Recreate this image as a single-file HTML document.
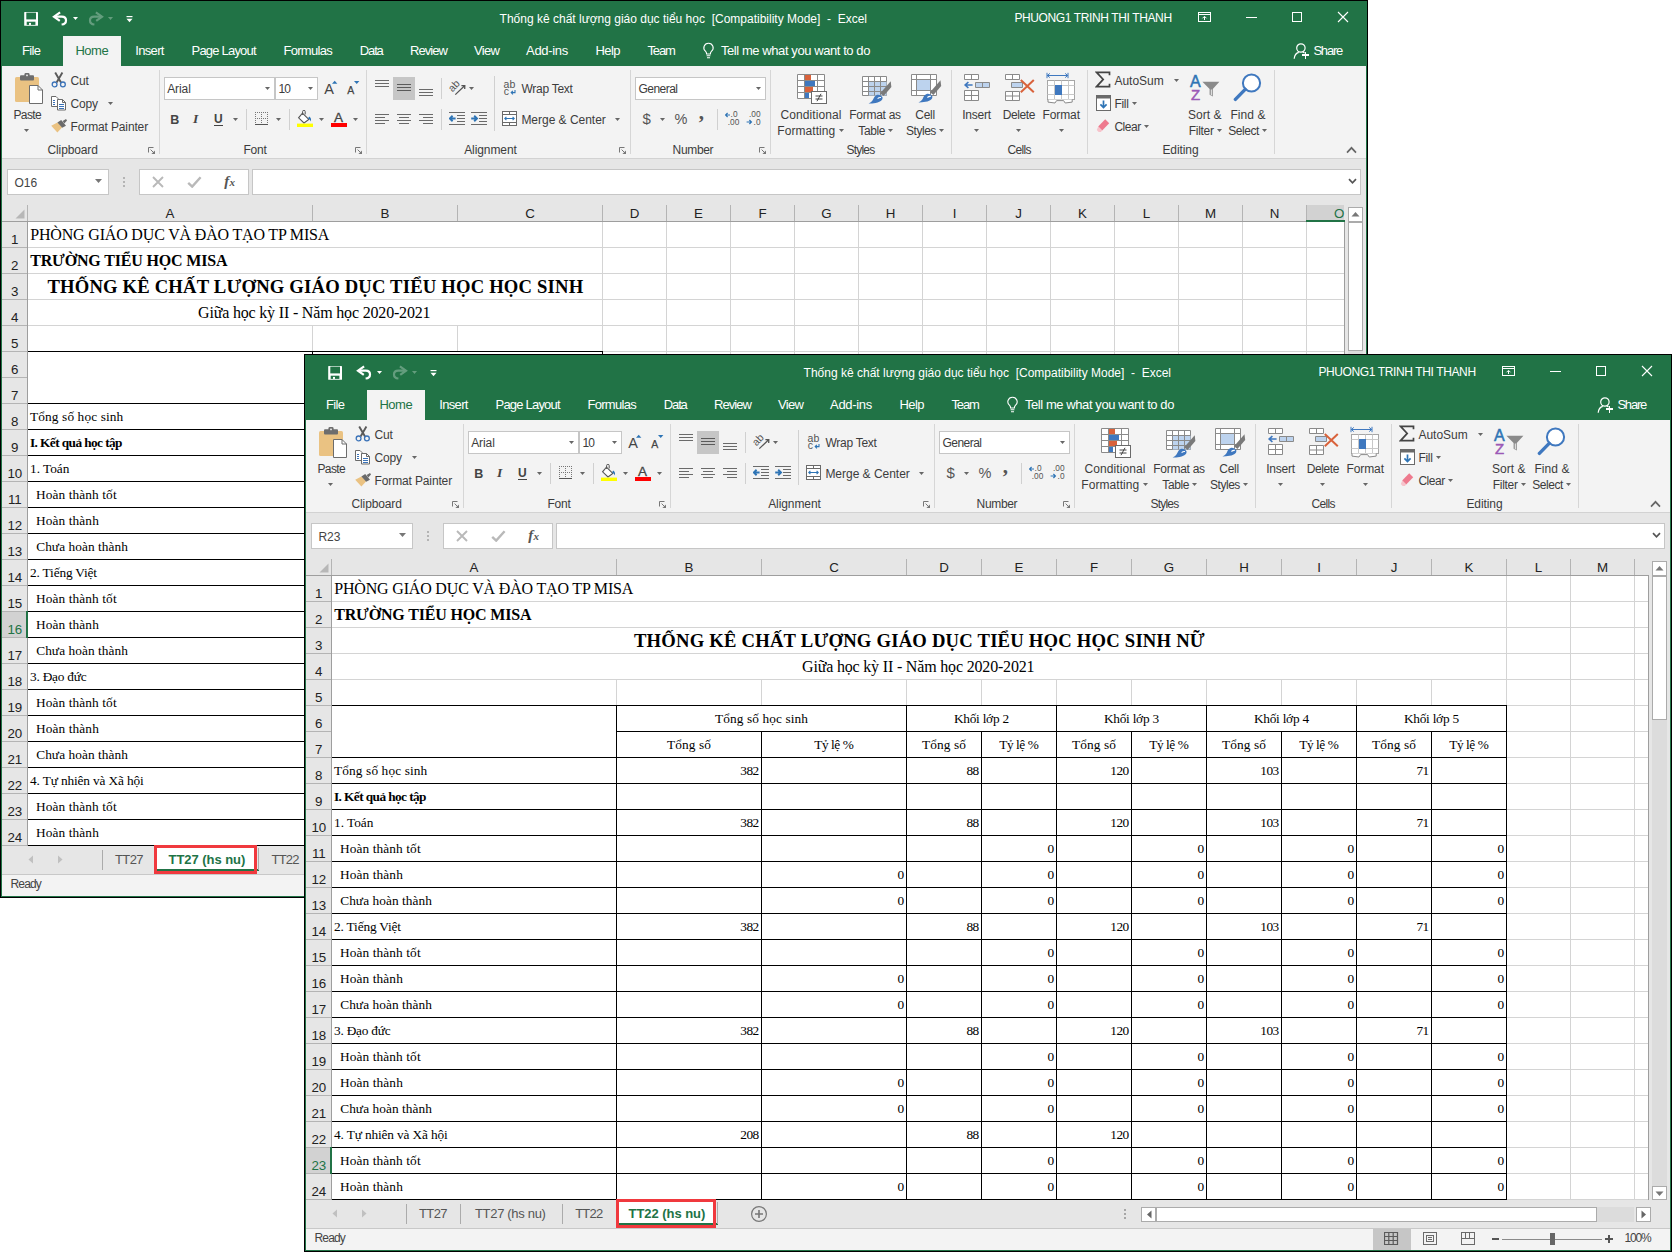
<!DOCTYPE html>
<html lang="vi"><head><meta charset="utf-8"><title>Excel</title><style>
*{box-sizing:border-box;margin:0;padding:0}
html,body{width:1672px;height:1252px;background:#fff;overflow:hidden}
body{position:relative;font-family:"Liberation Sans",sans-serif}
.win{position:absolute;width:1368px;height:898px;background:#fff;overflow:hidden;border:1px solid #000}
.in{position:absolute;left:-1px;top:-1px;width:1368px;height:898px}
.r{position:absolute;display:block}
.t{position:absolute;white-space:pre;line-height:1;display:block}
</style></head>
<body>
<div class="win" style="left:0px;top:0px">
<div class="in">
<div class="r" style="left:1px;top:1px;width:1366px;height:896px;border:1px solid #217346"></div>
<div class="r" style="left:1px;top:1px;width:1366px;height:65px;background:#217346"></div>
<div class="r" style="left:63px;top:36px;width:58px;height:30px;background:#f3f3f3"></div>
<div class="r" style="left:2px;top:66px;width:1364px;height:92px;background:#f3f3f3"></div>
<div class="r" style="left:2px;top:158px;width:1364px;height:1px;background:#d2d2d2"></div>
<div class="r" style="left:2px;top:159px;width:1364px;height:63px;background:#e6e6e6"></div>
<svg class="r" style="left:23px;top:11px" width="16" height="16" viewBox="0 0 16 16"><rect x="1.200" y="1" width="13.800" height="13.800" rx="0.600" fill="#fff"/><rect x="3.300" y="1.600" width="9.700" height="6.800" fill="#217346"/><rect x="3.700" y="10.700" width="8.700" height="3.200" fill="#217346"/><rect x="6" y="11.900" width="2" height="2" fill="#fff"/></svg>
<svg class="r" style="left:52px;top:11px" width="17" height="16" viewBox="0 0 17 16"><path d="M8.100 1.300L2 5.700l5.800 4.100" fill="none" stroke="#fff" stroke-width="2.200"/><path d="M2.600 5.700h7.200c2.600 0 4.200 1.700 4.200 3.700 0 2.200-1.800 3.800-4.400 4.100" fill="none" stroke="#fff" stroke-width="2.200"/></svg>
<svg class="r" style="left:72px;top:16px" width="7" height="5" viewBox="0 0 7 5"><path d="M1 1h5l-2.5 3z" fill="#fff"/></svg>
<svg class="r" style="left:87px;top:11px" width="17" height="16" viewBox="0 0 17 16"><g opacity="0.300"><path d="M8.900 1.300L15 5.700l-5.800 4.100" fill="none" stroke="#fff" stroke-width="2.200"/><path d="M14.400 5.700H7.200c-2.600 0-4.200 1.700-4.200 3.700 0 2.200 1.800 3.800 4.400 4.100" fill="none" stroke="#fff" stroke-width="2.200"/></g></svg>
<svg class="r" style="left:107px;top:16px" width="7" height="5" viewBox="0 0 7 5"><path d="M1 1h5l-2.500 3z" fill="#fff" opacity="0.300"/></svg>
<svg class="r" style="left:126px;top:15px" width="7" height="8" viewBox="0 0 7 8"><path d="M0.500 1.600h6" stroke="#fff" stroke-width="1.200"/><path d="M0.500 3.800h6l-3 3.400z" fill="#fff"/></svg>
<span class="t" style="left:499.60px;top:13.00px;font-size:12px;color:#fff">Thống kê chất lượng giáo dục tiểu học  [Compatibility Mode]  -  Excel</span>
<span class="t" style="left:1014.40px;top:12.00px;font-size:12px;color:#fff;letter-spacing:-0.380px">PHUONG1 TRINH THI THANH</span>
<svg class="r" style="left:1198px;top:12px" width="14" height="11" viewBox="0 0 14 11"><g shape-rendering="crispEdges" fill="none" stroke="#fff"><rect x="0.500" y="0.500" width="12" height="9"/><path d="M0.500 2.500h12"/><path d="M6.500 8V4.500"/></g><path d="M4.500 6.300l2-2 2 2" fill="none" stroke="#fff"/></svg>
<div class="r" style="left:1246px;top:17px;width:11px;height:1px;background:#fff"></div>
<div class="r" style="left:1292px;top:12px;width:10px;height:10px;border:1px solid #fff"></div>
<svg class="r" style="left:1337px;top:11px" width="12" height="12" viewBox="0 0 12 12"><path d="M1 1l10 10M11 1L1 11" stroke="#fff" stroke-width="1.1" fill="none"/></svg>
<span class="t" style="left:22.10px;top:44.00px;font-size:13px;color:#fff;letter-spacing:-0.713px">File</span>
<span class="t" style="left:135.20px;top:44.00px;font-size:13px;color:#fff;letter-spacing:-0.653px">Insert</span>
<span class="t" style="left:191.50px;top:44.00px;font-size:13px;color:#fff;letter-spacing:-0.792px">Page Layout</span>
<span class="t" style="left:283.40px;top:44.00px;font-size:13px;color:#fff;letter-spacing:-0.673px">Formulas</span>
<span class="t" style="left:359.80px;top:44.00px;font-size:13px;color:#fff;letter-spacing:-1.142px">Data</span>
<span class="t" style="left:410.00px;top:44.00px;font-size:13px;color:#fff;letter-spacing:-0.938px">Review</span>
<span class="t" style="left:474.10px;top:44.00px;font-size:13px;color:#fff;letter-spacing:-0.713px">View</span>
<span class="t" style="left:526.10px;top:44.00px;font-size:13px;color:#fff;letter-spacing:-0.340px">Add-ins</span>
<span class="t" style="left:595.50px;top:44.00px;font-size:13px;color:#fff;letter-spacing:-0.562px">Help</span>
<span class="t" style="left:647.50px;top:44.00px;font-size:13px;color:#fff;letter-spacing:-1.174px">Team</span>
<span class="t" style="left:75.40px;top:44.00px;font-size:13px;color:#217346;letter-spacing:-0.447px">Home</span>
<svg class="r" style="left:702px;top:42px" width="13" height="18" viewBox="0 0 13 18"><path d="M6.5 1.2a4.6 4.6 0 0 0-2.9 8.2c0.7 0.7 1 1.5 1 2.6h3.8c0-1.1 0.3-1.9 1-2.6A4.6 4.6 0 0 0 6.5 1.2z" fill="none" stroke="#fff" stroke-width="1.1"/><path d="M4.6 13.8h3.8M5 15.8h3" stroke="#fff" stroke-width="1.1"/></svg>
<span class="t" style="left:720.90px;top:44.00px;font-size:13px;color:#fff;letter-spacing:-0.419px">Tell me what you want to do</span>
<svg class="r" style="left:1293px;top:42px" width="17" height="18" viewBox="0 0 17 18"><circle cx="7.900" cy="6" r="4.200" fill="none" stroke="#fff" stroke-width="1.200"/><path d="M1.200 16.800c0.300-3.600 2.200-5.800 4.600-6.400" fill="none" stroke="#fff" stroke-width="1.200"/><path d="M9.800 10.200c0.700 0.200 1.300 0.500 1.800 0.900" fill="none" stroke="#fff" stroke-width="1.200"/><path d="M12.500 9.500v7M9 13h7" stroke="#fff" stroke-width="1.100" shape-rendering="crispEdges"/></svg>
<span class="t" style="left:1313.40px;top:44.00px;font-size:13px;color:#fff;letter-spacing:-1.200px">Share</span>
<svg class="r" style="left:14px;top:72px" width="31" height="33" viewBox="0 0 31 33"><rect x="1" y="5" width="24" height="25" rx="1.500" fill="#eac282"/><rect x="6" y="3.200" width="14" height="5.400" rx="1" fill="#6d6d6d"/><rect x="10.400" y="1" width="5.200" height="4" rx="1.400" fill="#6d6d6d"/><rect x="12.200" y="2.600" width="1.600" height="1.600" fill="#f3f3f3"/><path d="M15.500 13.500h8.500l4.500 4.500v13.500h-13z" fill="#fff" stroke="#6d6d6d"/><path d="M24 13.500v4.500h4.500" fill="none" stroke="#6d6d6d"/></svg>
<span class="t" style="left:13.40px;top:109.00px;font-size:12px;color:#3c3c3c;letter-spacing:-0.577px">Paste</span>
<svg class="r" style="left:23px;top:128px" width="7" height="5" viewBox="0 0 7 5"><path d="M1 1h5l-2.5 3z" fill="#666"/></svg>
<svg class="r" style="left:51px;top:72px" width="16" height="16" viewBox="0 0 16 16"><path d="M4.200 0.600l5.800 9.800M11.400 0.600l-5.800 9.800" stroke="#5a5a5a" stroke-width="1.900" fill="none"/><circle cx="3.600" cy="12.400" r="2.400" fill="none" stroke="#3a72b8" stroke-width="1.300"/><circle cx="11.900" cy="12.400" r="2.400" fill="none" stroke="#3a72b8" stroke-width="1.300"/></svg>
<span class="t" style="left:70.60px;top:75.00px;font-size:12px;color:#3c3c3c;letter-spacing:-0.163px">Cut</span>
<svg class="r" style="left:50px;top:96px" width="17" height="15" viewBox="0 0 17 15"><path d="M1.500 0.500h4.500l2 2v8h-6.500z" fill="#fff" stroke="#6a6a6a"/><path d="M3 4.500h2M3 6.500h2M3 8.500h2" stroke="#3a72b8" stroke-width="1"/><path d="M7.500 3.500h5l3 3v7.500h-8z" fill="#fff" stroke="#6a6a6a"/><path d="M12.500 3.500v3h3" fill="none" stroke="#6a6a6a"/><path d="M9 8.500h5M9 10.500h5M9 12.500h5" stroke="#3a72b8" stroke-width="1"/></svg>
<span class="t" style="left:70.60px;top:98.00px;font-size:12px;color:#3c3c3c;letter-spacing:-0.204px">Copy</span>
<svg class="r" style="left:107px;top:101px" width="7" height="5" viewBox="0 0 7 5"><path d="M1 1h5l-2.5 3z" fill="#666"/></svg>
<svg class="r" style="left:51px;top:118px" width="17" height="16" viewBox="0 0 17 16"><path d="M0.200 7.800l6.200-3.300 4.800 4.700-4.800 5.300z" fill="#eac282"/><path d="M6.400 4.500l3.800-2.500 4.800 5.800-3.800 1.900z" fill="#6a6a6a"/><path d="M11.700 3l3.300-2 1 1.500-2.700 2.900z" fill="#6a6a6a"/></svg>
<span class="t" style="left:70.60px;top:121.00px;font-size:12px;color:#3c3c3c;letter-spacing:-0.140px">Format Painter</span>
<span class="t" style="left:47.50px;top:144.00px;font-size:12px;color:#3c3c3c;letter-spacing:-0.119px">Clipboard</span>
<svg class="r" style="left:148px;top:147px" width="8" height="8" viewBox="0 0 8 8"><path d="M0.500 5.500V0.500H5.500" fill="none" stroke="#777"/><path d="M2.600 2.600l3.600 3.600" fill="none" stroke="#777"/><path d="M7 3.400V7H3.400z" fill="#777"/></svg>
<div class="r" style="left:159px;top:70px;width:1px;height:84px;background:#d6d6d6"></div>
<div class="r" style="left:164px;top:77px;width:111px;height:23px;background:#fff;border:1px solid #c6c6c6"></div>
<div class="r" style="left:275px;top:77px;width:43px;height:23px;background:#fff;border:1px solid #c6c6c6"></div>
<span class="t" style="left:167.20px;top:83.00px;font-size:12px;color:#3c3c3c;letter-spacing:-0.083px">Arial</span>
<svg class="r" style="left:264px;top:86px" width="7" height="5" viewBox="0 0 7 5"><path d="M1 1h5l-2.5 3z" fill="#666"/></svg>
<span class="t" style="left:278.60px;top:83.00px;font-size:12px;color:#3c3c3c;letter-spacing:-0.980px">10</span>
<svg class="r" style="left:307px;top:86px" width="7" height="5" viewBox="0 0 7 5"><path d="M1 1h5l-2.5 3z" fill="#666"/></svg>
<span class="t" style="left:324.30px;top:82.00px;font-size:14.5px;color:#444">A</span>
<svg class="r" style="left:332px;top:80px" width="6" height="4" viewBox="0 0 6 4"><path d="M0 3.800l2.700-3 2.700 3z" fill="#2e74b5"/></svg>
<span class="t" style="left:347.20px;top:85.00px;font-size:10.5px;color:#444;-webkit-text-stroke:0.25px #444">A</span>
<svg class="r" style="left:354px;top:81px" width="6" height="4" viewBox="0 0 6 4"><path d="M0 0h5.400l-2.700 3z" fill="#2e74b5"/></svg>
<span class="t" style="left:170.20px;top:114.00px;font-size:12.5px;color:#444;font-weight:bold">B</span>
<span class="t" style="left:193.00px;top:112.00px;font-size:13.5px;color:#444;font-family:'Liberation Serif',serif;font-weight:bold;font-style:italic">I</span>
<span class="t" style="left:213.90px;top:113.00px;font-size:12px;color:#444;font-weight:bold">U</span>
<div class="r" style="left:214px;top:125px;width:9px;height:1px;background:#444"></div>
<svg class="r" style="left:232px;top:117px" width="7" height="5" viewBox="0 0 7 5"><path d="M1 1h5l-2.5 3z" fill="#666"/></svg>
<div class="r" style="left:246px;top:109px;width:1px;height:21px;background:#d0d0d0"></div>
<svg class="r" style="left:255px;top:112px" width="13" height="13" viewBox="0 0 13 13"><g shape-rendering="crispEdges" fill="none" stroke="#777" stroke-dasharray="1 1"><path d="M0 0.500h13M0 6.500h13M0.500 0v12M6.500 0v12M12.500 0v12"/></g><path d="M0 12.400h13" stroke="#555" stroke-width="1.200" shape-rendering="crispEdges"/></svg>
<svg class="r" style="left:275px;top:117px" width="7" height="5" viewBox="0 0 7 5"><path d="M1 1h5l-2.5 3z" fill="#666"/></svg>
<div class="r" style="left:289px;top:109px;width:1px;height:21px;background:#d0d0d0"></div>
<svg class="r" style="left:296px;top:110px" width="18" height="17" viewBox="0 0 18 17"><path d="M6.4 3.2l6.4 6.2-4.8 3.6-5.4-5.2z" fill="#fff" stroke="#555" stroke-width="1.1"/><path d="M6.6 5V1.6a1.3 1.3 0 0 1 2.6 0v2.8" fill="none" stroke="#555" stroke-width="1"/><path d="M13.2 6.6c1.8 1.2 2.4 3 1.4 5-0.3-1.6-1.2-2.6-2.6-3z" fill="#2e74b5"/><rect x="1" y="13.6" width="16" height="3.4" fill="#ffff00"/></svg>
<svg class="r" style="left:318px;top:117px" width="7" height="5" viewBox="0 0 7 5"><path d="M1 1h5l-2.5 3z" fill="#666"/></svg>
<span class="t" style="left:334.00px;top:111.00px;font-size:13.5px;color:#444;-webkit-text-stroke:0.3px #444">A</span>
<div class="r" style="left:331px;top:123px;width:16px;height:4px;background:#ff0000"></div>
<svg class="r" style="left:352px;top:117px" width="7" height="5" viewBox="0 0 7 5"><path d="M1 1h5l-2.5 3z" fill="#666"/></svg>
<span class="t" style="left:243.50px;top:144.00px;font-size:12px;color:#3c3c3c;letter-spacing:-0.254px">Font</span>
<svg class="r" style="left:355px;top:147px" width="8" height="8" viewBox="0 0 8 8"><path d="M0.500 5.500V0.500H5.500" fill="none" stroke="#777"/><path d="M2.600 2.600l3.600 3.600" fill="none" stroke="#777"/><path d="M7 3.400V7H3.400z" fill="#777"/></svg>
<div class="r" style="left:366px;top:70px;width:1px;height:84px;background:#d6d6d6"></div>
<svg class="r" style="left:375px;top:80px" width="14" height="7" viewBox="0 0 14 7"><path d="M0 0.5h14M0 3.5h14M0 6.5h14" stroke="#6a6a6a"/></svg>
<div class="r" style="left:393px;top:77px;width:22px;height:23px;background:#c6c6c6"></div>
<svg class="r" style="left:397px;top:84px" width="14" height="7" viewBox="0 0 14 7"><path d="M0 0.5h14M0 3.5h14M0 6.5h14" stroke="#5a5a5a"/></svg>
<svg class="r" style="left:419px;top:89px" width="14" height="7" viewBox="0 0 14 7"><path d="M0 0.5h14M0 3.5h14M0 6.5h14" stroke="#6a6a6a"/></svg>
<div class="r" style="left:441px;top:78px;width:1px;height:21px;background:#d0d0d0"></div>
<svg class="r" style="left:446px;top:78px" width="21" height="19" viewBox="0 0 21 19"><path d="M9.300 16.600L18.600 7.800M15.400 7.600l3.400 0.100-0.100 3.400" fill="none" stroke="#555" stroke-width="1.300"/><text x="0" y="0" font-family="Liberation Sans,sans-serif" font-size="10.500" fill="#555" transform="translate(6.600 14.600) rotate(-47)">ab</text></svg>
<svg class="r" style="left:468px;top:86px" width="7" height="5" viewBox="0 0 7 5"><path d="M1 1h5l-2.5 3z" fill="#666"/></svg>
<div class="r" style="left:494px;top:76px;width:1px;height:55px;background:#d0d0d0"></div>
<svg class="r" style="left:503px;top:79px" width="15" height="17" viewBox="0 0 15 17"><text x="0.600" y="9.200" font-family="Liberation Sans,sans-serif" font-size="10.500" fill="#555">ab</text><text x="0.800" y="15.900" font-family="Liberation Sans,sans-serif" font-size="10.500" fill="#555">c</text><path d="M12 11v2.600H8.400M9.900 11.900l-1.700 1.700 1.700 1.700" fill="none" stroke="#2e74b5" stroke-width="1.100"/></svg>
<span class="t" style="left:521.40px;top:83.00px;font-size:12px;color:#3c3c3c;letter-spacing:-0.253px">Wrap Text</span>
<svg class="r" style="left:375px;top:114px" width="14" height="11" viewBox="0 0 14 11"><path d="M0 0.5h14M0 3.5h10M0 6.5h14M0 9.5h10" stroke="#6a6a6a"/></svg>
<svg class="r" style="left:397px;top:114px" width="14" height="11" viewBox="0 0 14 11"><path d="M0 0.5h14M2 3.5h10M0 6.5h14M2 9.5h10" stroke="#6a6a6a"/></svg>
<svg class="r" style="left:419px;top:114px" width="14" height="11" viewBox="0 0 14 11"><path d="M0 0.5h14M4 3.5h10M0 6.5h14M4 9.5h10" stroke="#6a6a6a"/></svg>
<div class="r" style="left:441px;top:109px;width:1px;height:21px;background:#d0d0d0"></div>
<svg class="r" style="left:449px;top:112px" width="16" height="14" viewBox="0 0 16 14"><path d="M0 0.500h16M8 3.500h8M8 6.500h8M8 9.500h8M0 12.500h16" stroke="#6a6a6a" shape-rendering="crispEdges"/><path d="M6.600 6.500H1.400M3.600 3.800L0.800 6.500l2.800 2.700" fill="none" stroke="#2e74b5" stroke-width="1.900"/></svg>
<svg class="r" style="left:471px;top:112px" width="16" height="14" viewBox="0 0 16 14"><path d="M0 0.500h16M8 3.500h8M8 6.500h8M8 9.500h8M0 12.500h16" stroke="#6a6a6a" shape-rendering="crispEdges"/><path d="M0.200 6.500h5.200M3.200 3.800l2.800 2.700-2.800 2.700" fill="none" stroke="#2e74b5" stroke-width="1.900"/></svg>
<svg class="r" style="left:502px;top:111px" width="16" height="15" viewBox="0 0 16 15"><path d="M0.500 0.500h14v14h-14zM0.500 3.500h14M0.500 11.500h14M7.500 0.500v3M7.500 11.500v3" fill="#fff" stroke="#6a6a6a" shape-rendering="crispEdges"/><path d="M2.800 7.500h9.400M4.400 5.900L2.800 7.500l1.600 1.600M10.600 5.900l1.600 1.600-1.600 1.600" fill="none" stroke="#2e74b5" stroke-width="1.100"/></svg>
<span class="t" style="left:521.40px;top:114.00px;font-size:12px;color:#3c3c3c;letter-spacing:-0.022px">Merge &amp; Center</span>
<svg class="r" style="left:614px;top:117px" width="7" height="5" viewBox="0 0 7 5"><path d="M1 1h5l-2.5 3z" fill="#666"/></svg>
<span class="t" style="left:464.20px;top:144.00px;font-size:12px;color:#3c3c3c;letter-spacing:-0.086px">Alignment</span>
<svg class="r" style="left:619px;top:147px" width="8" height="8" viewBox="0 0 8 8"><path d="M0.500 5.500V0.500H5.500" fill="none" stroke="#777"/><path d="M2.600 2.600l3.600 3.600" fill="none" stroke="#777"/><path d="M7 3.400V7H3.400z" fill="#777"/></svg>
<div class="r" style="left:630px;top:70px;width:1px;height:84px;background:#d6d6d6"></div>
<div class="r" style="left:635px;top:77px;width:131px;height:23px;background:#fff;border:1px solid #c6c6c6"></div>
<span class="t" style="left:638.60px;top:83.00px;font-size:12px;color:#3c3c3c;letter-spacing:-0.558px">General</span>
<svg class="r" style="left:755px;top:86px" width="7" height="5" viewBox="0 0 7 5"><path d="M1 1h5l-2.5 3z" fill="#666"/></svg>
<span class="t" style="left:642.60px;top:111.00px;font-size:15px;color:#555">$</span>
<svg class="r" style="left:659px;top:117px" width="7" height="5" viewBox="0 0 7 5"><path d="M1 1h5l-2.5 3z" fill="#666"/></svg>
<span class="t" style="left:674.50px;top:112.00px;font-size:14.5px;color:#555">%</span>
<span class="t" style="left:698.80px;top:102.00px;font-size:21px;color:#555;font-family:'Liberation Serif',serif;font-weight:bold">,</span>
<div class="r" style="left:717px;top:109px;width:1px;height:21px;background:#d0d0d0"></div>
<svg class="r" style="left:725px;top:111px" width="16" height="15" viewBox="0 0 16 15"><path d="M5 4H0.8M2.6 2L0.6 4l2 2" fill="none" stroke="#2e74b5" stroke-width="1.2"/><text x="5.6" y="6.4" font-family="Liberation Sans,sans-serif" font-size="8.300" fill="#555">.0</text><text x="2.8" y="14" font-family="Liberation Sans,sans-serif" font-size="8.300" fill="#555">.00</text></svg>
<svg class="r" style="left:746px;top:111px" width="17" height="15" viewBox="0 0 17 15"><text x="3" y="6.4" font-family="Liberation Sans,sans-serif" font-size="8.300" fill="#555">.00</text><path d="M0.6 11h4.6M3.4 9l2 2-2 2" fill="none" stroke="#2e74b5" stroke-width="1.2"/><text x="7.6" y="14" font-family="Liberation Sans,sans-serif" font-size="8.300" fill="#555">.0</text></svg>
<span class="t" style="left:672.60px;top:144.00px;font-size:12px;color:#3c3c3c;letter-spacing:-0.348px">Number</span>
<svg class="r" style="left:759px;top:147px" width="8" height="8" viewBox="0 0 8 8"><path d="M0.500 5.500V0.500H5.500" fill="none" stroke="#777"/><path d="M2.600 2.600l3.600 3.600" fill="none" stroke="#777"/><path d="M7 3.400V7H3.400z" fill="#777"/></svg>
<div class="r" style="left:770px;top:70px;width:1px;height:84px;background:#d6d6d6"></div>
<svg class="r" style="left:797px;top:74px" width="31" height="31" viewBox="0 0 31 31"><path d="M0.5 0.5h27v24h-27zM0.5 6.5h27M0.5 12.5h27M0.5 18.5h27M7.5 0.5v24M20.5 0.5v24" fill="#fff" stroke="#8a8a8a"/><rect x="8" y="1" width="6" height="5" fill="#d9623b"/><rect x="8" y="7" width="10" height="5" fill="#3f78bf"/><rect x="8" y="13" width="8" height="5" fill="#d9623b"/><rect x="8" y="19" width="4" height="5" fill="#3f78bf"/><rect x="14.5" y="17.5" width="15" height="12" fill="#fff" stroke="#6a6a6a"/><path d="M18.5 22h7M18.5 25h7M24 19.8l-4 7.4" stroke="#444" stroke-width="1" fill="none"/></svg>
<span class="t" style="left:780.40px;top:109.00px;font-size:12px;color:#3c3c3c;letter-spacing:0.105px">Conditional</span>
<span class="t" style="left:777.30px;top:125.00px;font-size:12px;color:#3c3c3c;letter-spacing:0.064px">Formatting</span>
<svg class="r" style="left:838px;top:128px" width="7" height="5" viewBox="0 0 7 5"><path d="M1 1h5l-2.5 3z" fill="#666"/></svg>
<svg class="r" style="left:862px;top:76px" width="31" height="29" viewBox="0 0 31 29"><path d="M0.5 0.5h24v19h-24z" fill="#fff" stroke="#8a8a8a"/><rect x="6.5" y="5.5" width="18" height="14" fill="#bdd3ee"/><path d="M0.5 5.5h24M0.5 10.5h24M0.5 15.5h24M6.5 0.5v19M12.5 0.5v19M18.5 0.5v19" fill="none" stroke="#8a8a8a"/><path d="M28.700 5.300l0.700 5.700-7.800 9.100-3.400-2.800z" fill="#7a7a7a"/><path d="M14.800 19c2.200-0.600 4.400 0.400 5.700 2.250 0.200 1.200-0.100 2.100-0.600 2.850-1.400 1.500-3.400 2.400-6.200 2.800-2.300 0.400-4.700 0.600-7.100 0.600 2-0.900 3.300-2 4.200-3.400 0.600-1.100 0.900-2.300 1.700-3.400 0.600-0.800 1.400-1.400 2.300-1.700z" fill="#3f78bf"/><path d="M15.600 22.600c1-0.900 2.200-1.300 3.400-1.100" stroke="#fff" stroke-width="1.100" fill="none"/></svg>
<span class="t" style="left:849.30px;top:109.00px;font-size:12px;color:#3c3c3c;letter-spacing:-0.280px">Format as</span>
<span class="t" style="left:858.30px;top:125.00px;font-size:12px;color:#3c3c3c;letter-spacing:-0.398px">Table</span>
<svg class="r" style="left:887px;top:128px" width="7" height="5" viewBox="0 0 7 5"><path d="M1 1h5l-2.5 3z" fill="#666"/></svg>
<svg class="r" style="left:911px;top:74px" width="31" height="30" viewBox="0 0 31 30"><path d="M0.5 0.5h25v21h-25z" fill="#fff" stroke="#8a8a8a"/><rect x="5.5" y="5.5" width="14" height="11" fill="#bdd3ee"/><path d="M0.5 5.500h25M0.5 16.500h25M5.5 0.500v21M19.500 0.500v21" fill="none" stroke="#8a8a8a"/><g transform="translate(0.800 0.900)"><path d="M28.700 5.300l0.700 5.700-7.800 9.100-3.400-2.800z" fill="#7a7a7a"/><path d="M14.800 19c2.200-0.600 4.400 0.400 5.700 2.250 0.200 1.200-0.100 2.100-0.600 2.850-1.400 1.500-3.400 2.400-6.200 2.800-2.300 0.400-4.700 0.600-7.100 0.600 2-0.900 3.300-2 4.200-3.400 0.600-1.100 0.900-2.300 1.700-3.400 0.600-0.800 1.400-1.400 2.300-1.700z" fill="#3f78bf"/><path d="M15.600 22.600c1-0.900 2.200-1.300 3.400-1.100" stroke="#fff" stroke-width="1.100" fill="none"/></g></svg>
<span class="t" style="left:915.30px;top:109.00px;font-size:12px;color:#3c3c3c;letter-spacing:-0.293px">Cell</span>
<span class="t" style="left:906.10px;top:125.00px;font-size:12px;color:#3c3c3c;letter-spacing:-0.481px">Styles</span>
<svg class="r" style="left:938px;top:128px" width="7" height="5" viewBox="0 0 7 5"><path d="M1 1h5l-2.5 3z" fill="#666"/></svg>
<span class="t" style="left:846.40px;top:144.00px;font-size:12px;color:#3c3c3c;letter-spacing:-0.765px">Styles</span>
<div class="r" style="left:951px;top:70px;width:1px;height:84px;background:#d6d6d6"></div>
<svg class="r" style="left:963px;top:73px" width="28" height="29" viewBox="0 0 28 29"><path d="M1.500 1.500h14v5h-14zM8.500 1.500v5" fill="#fff" stroke="#8a8a8a"/><path d="M1.500 17.500h14v10h-14zM8.500 17.500v10M1.500 22.500h14" fill="#fff" stroke="#8a8a8a"/><path d="M12.500 9.500h14v5h-14zM19.500 9.500v5" fill="#bdd3ee" stroke="#8a8a8a"/><path d="M9.600 12H2.400M5.400 9L2.200 12l3.200 3" fill="none" stroke="#3f78bf" stroke-width="1.700"/></svg>
<span class="t" style="left:962.20px;top:109.00px;font-size:12px;color:#3c3c3c;letter-spacing:-0.219px">Insert</span>
<svg class="r" style="left:973px;top:128px" width="7" height="5" viewBox="0 0 7 5"><path d="M1 1h5l-2.5 3z" fill="#666"/></svg>
<svg class="r" style="left:1004px;top:73px" width="32" height="29" viewBox="0 0 32 29"><path d="M1.500 1.500h14v5h-14zM8.500 1.500v5" fill="#fff" stroke="#8a8a8a"/><path d="M1.500 18.500h14v9h-14zM8.500 18.500v9M1.500 23h14" fill="#fff" stroke="#8a8a8a"/><path d="M7.500 9.500h11v5h-11z" fill="#bdd3ee" stroke="#8a8a8a"/><path d="M16.800 7l13 12.200M29.800 7L16.800 19.200" fill="none" stroke="#d9623b" stroke-width="2"/></svg>
<span class="t" style="left:1002.80px;top:109.00px;font-size:12px;color:#3c3c3c;letter-spacing:-0.415px">Delete</span>
<svg class="r" style="left:1015px;top:128px" width="7" height="5" viewBox="0 0 7 5"><path d="M1 1h5l-2.5 3z" fill="#666"/></svg>
<svg class="r" style="left:1046px;top:72px" width="30" height="33" viewBox="0 0 30 33"><path d="M1 3.500h21M1 0.800v5.400M22 0.800v5.400M3.800 1.400L1.400 3.500l2.400 2.100M19.200 1.400l2.400 2.100-2.400 2.100" fill="none" stroke="#3f78bf" stroke-width="1"/><path d="M1.500 8.500h27v19h-27z" fill="#fff" stroke="#8a8a8a" stroke-dasharray="1 0"/><path d="M1.500 13.500h27M1.500 22.500h27M8.500 8.500v19M15.500 8.500v19M22.500 8.500v19" fill="none" stroke="#c8c8c8"/><rect x="9" y="13" width="7" height="10" fill="#3f78bf"/><path d="M2 27.500v2.600l7 0.900 1.600-2.400h7l1.600 2.400 7-0.900v-2.600" fill="#fff" stroke="#8a8a8a"/></svg>
<span class="t" style="left:1042.60px;top:109.00px;font-size:12px;color:#3c3c3c;letter-spacing:-0.119px">Format</span>
<svg class="r" style="left:1058px;top:128px" width="7" height="5" viewBox="0 0 7 5"><path d="M1 1h5l-2.5 3z" fill="#666"/></svg>
<span class="t" style="left:1007.60px;top:144.00px;font-size:12px;color:#3c3c3c;letter-spacing:-0.714px">Cells</span>
<div class="r" style="left:1087px;top:70px;width:1px;height:84px;background:#d6d6d6"></div>
<svg class="r" style="left:1095px;top:71px" width="16" height="17" viewBox="0 0 16 17"><path d="M14.500 4.200V1.400H1.600l6.600 7-6.600 7.200h12.900v-2.800" fill="none" stroke="#444" stroke-width="1.700"/></svg>
<span class="t" style="left:1114.40px;top:75.00px;font-size:12px;color:#3c3c3c;letter-spacing:-0.008px">AutoSum</span>
<svg class="r" style="left:1173px;top:78px" width="7" height="5" viewBox="0 0 7 5"><path d="M1 1h5l-2.5 3z" fill="#666"/></svg>
<svg class="r" style="left:1096px;top:95px" width="15" height="16" viewBox="0 0 15 16"><rect x="0.500" y="0.500" width="14" height="15" fill="#fff" stroke="#6a6a6a"/><rect x="0.500" y="0.500" width="14" height="3" fill="#6a6a6a"/><path d="M7.500 5.600v6.800M4.400 9.400l3.100 3.200 3.100-3.200" fill="none" stroke="#2e74b5" stroke-width="1.700"/></svg>
<span class="t" style="left:1114.40px;top:98.00px;font-size:12px;color:#3c3c3c;letter-spacing:-0.257px">Fill</span>
<svg class="r" style="left:1131px;top:101px" width="7" height="5" viewBox="0 0 7 5"><path d="M1 1h5l-2.5 3z" fill="#666"/></svg>
<svg class="r" style="left:1096px;top:118px" width="14" height="15" viewBox="0 0 14 15"><path d="M9.200 1.200l4 4-7 7.400-4-4z" fill="#ee7a8e"/><path d="M2.200 8.600l4 4-1.400 1.400H2.600L0.800 12z" fill="#f7c3cb"/></svg>
<span class="t" style="left:1114.40px;top:121.00px;font-size:12px;color:#3c3c3c;letter-spacing:-0.458px">Clear</span>
<svg class="r" style="left:1143px;top:124px" width="7" height="5" viewBox="0 0 7 5"><path d="M1 1h5l-2.5 3z" fill="#666"/></svg>
<span class="t" style="left:1190.00px;top:74.00px;font-size:16px;color:#2e74b5;-webkit-text-stroke:0.5px #2e74b5">A</span>
<span class="t" style="left:1191.00px;top:87.00px;font-size:15px;color:#9b59b6;-webkit-text-stroke:0.5px #9b59b6">Z</span>
<svg class="r" style="left:1202px;top:81px" width="18" height="17" viewBox="0 0 18 17"><path d="M0.400 0.800h17l-6.600 7.200v7.400l-3.200-1.600V8z" fill="#8a8a8a"/><path d="M8.800 8.400v5.600l1 0.500V8.400z" fill="#f3f3f3"/></svg>
<span class="t" style="left:1188.00px;top:109.00px;font-size:12px;color:#3c3c3c;letter-spacing:0.040px">Sort &amp;</span>
<span class="t" style="left:1188.70px;top:125.00px;font-size:12px;color:#3c3c3c;letter-spacing:-0.279px">Filter</span>
<svg class="r" style="left:1216px;top:128px" width="7" height="5" viewBox="0 0 7 5"><path d="M1 1h5l-2.5 3z" fill="#666"/></svg>
<svg class="r" style="left:1233px;top:73px" width="29" height="29" viewBox="0 0 29 29"><circle cx="18.500" cy="10" r="8.600" fill="#fff" stroke="#3f78bf" stroke-width="2"/><path d="M12.200 16.400L2.400 26.400" stroke="#3f78bf" stroke-width="3.400" stroke-linecap="round"/></svg>
<span class="t" style="left:1230.40px;top:109.00px;font-size:12px;color:#3c3c3c;letter-spacing:0.102px">Find &amp;</span>
<span class="t" style="left:1228.20px;top:125.00px;font-size:12px;color:#3c3c3c;letter-spacing:-0.427px">Select</span>
<svg class="r" style="left:1261px;top:128px" width="7" height="5" viewBox="0 0 7 5"><path d="M1 1h5l-2.5 3z" fill="#666"/></svg>
<span class="t" style="left:1162.40px;top:144.00px;font-size:12px;color:#3c3c3c;letter-spacing:-0.072px">Editing</span>
<div class="r" style="left:1274px;top:70px;width:1px;height:84px;background:#d6d6d6"></div>
<svg class="r" style="left:1346px;top:146px" width="11" height="8" viewBox="0 0 11 8"><path d="M1 6.600l4.500-4.800 4.500 4.800" fill="none" stroke="#666" stroke-width="1.700"/></svg>
<div class="r" style="left:7px;top:169px;width:102px;height:26px;background:#fff;border:1px solid #c6c6c6"></div>
<span class="t" style="left:14.40px;top:177.00px;font-size:12px;color:#444">O16</span>
<svg class="r" style="left:94px;top:178px" width="9" height="6" viewBox="0 0 9 6"><path d="M1 1h7l-3.5 4z" fill="#777"/></svg>
<div class="r" style="left:123px;top:177px;width:2px;height:2px;background:#b4b4b4"></div>
<div class="r" style="left:123px;top:181px;width:2px;height:2px;background:#b4b4b4"></div>
<div class="r" style="left:123px;top:185px;width:2px;height:2px;background:#b4b4b4"></div>
<div class="r" style="left:139px;top:169px;width:110px;height:26px;background:#fff;border:1px solid #c6c6c6"></div>
<svg class="r" style="left:152px;top:176px" width="12" height="12" viewBox="0 0 12 12"><path d="M1 1l10 10M11 1L1 11" stroke="#b9b9b9" stroke-width="1.900" fill="none"/></svg>
<svg class="r" style="left:187px;top:176px" width="15" height="12" viewBox="0 0 15 12"><path d="M1.200 6.800l4 3.800L13.600 1.200" stroke="#b9b9b9" stroke-width="2.400" fill="none"/></svg>
<span class="t" style="left:224.30px;top:174.00px;font-size:15px;color:#555;font-family:'Liberation Serif',serif;font-weight:bold;font-style:italic">f</span>
<span class="t" style="left:229.60px;top:177.00px;font-size:11px;color:#555;font-family:'Liberation Serif',serif;font-weight:bold;font-style:italic">x</span>
<div class="r" style="left:252px;top:169px;width:1109px;height:26px;background:#fff;border:1px solid #c6c6c6"></div>
<svg class="r" style="left:1348px;top:178px" width="9" height="7" viewBox="0 0 9 7"><path d="M1 1.2l3.5 3.6L8 1.2" stroke="#555" stroke-width="1.7" fill="none"/></svg>
<div class="r" style="left:28px;top:222px;width:1316px;height:624px;background:#fff"></div>
<div class="r" style="left:2px;top:222px;width:26px;height:624px;background:#e6e6e6"></div>
<div class="r" style="left:28px;top:247px;width:1316px;height:1px;background:#d4d4d4"></div><div class="r" style="left:28px;top:273px;width:1316px;height:1px;background:#d4d4d4"></div><div class="r" style="left:28px;top:299px;width:1316px;height:1px;background:#d4d4d4"></div><div class="r" style="left:28px;top:325px;width:1316px;height:1px;background:#d4d4d4"></div><div class="r" style="left:28px;top:351px;width:1316px;height:1px;background:#d4d4d4"></div><div class="r" style="left:28px;top:377px;width:1316px;height:1px;background:#d4d4d4"></div><div class="r" style="left:28px;top:403px;width:1316px;height:1px;background:#d4d4d4"></div><div class="r" style="left:28px;top:429px;width:1316px;height:1px;background:#d4d4d4"></div><div class="r" style="left:28px;top:455px;width:1316px;height:1px;background:#d4d4d4"></div><div class="r" style="left:28px;top:481px;width:1316px;height:1px;background:#d4d4d4"></div><div class="r" style="left:28px;top:507px;width:1316px;height:1px;background:#d4d4d4"></div><div class="r" style="left:28px;top:533px;width:1316px;height:1px;background:#d4d4d4"></div><div class="r" style="left:28px;top:559px;width:1316px;height:1px;background:#d4d4d4"></div><div class="r" style="left:28px;top:585px;width:1316px;height:1px;background:#d4d4d4"></div><div class="r" style="left:28px;top:611px;width:1316px;height:1px;background:#d4d4d4"></div><div class="r" style="left:28px;top:637px;width:1316px;height:1px;background:#d4d4d4"></div><div class="r" style="left:28px;top:663px;width:1316px;height:1px;background:#d4d4d4"></div><div class="r" style="left:28px;top:689px;width:1316px;height:1px;background:#d4d4d4"></div><div class="r" style="left:28px;top:715px;width:1316px;height:1px;background:#d4d4d4"></div><div class="r" style="left:28px;top:741px;width:1316px;height:1px;background:#d4d4d4"></div><div class="r" style="left:28px;top:767px;width:1316px;height:1px;background:#d4d4d4"></div><div class="r" style="left:28px;top:793px;width:1316px;height:1px;background:#d4d4d4"></div><div class="r" style="left:28px;top:819px;width:1316px;height:1px;background:#d4d4d4"></div><div class="r" style="left:28px;top:845px;width:1316px;height:1px;background:#d4d4d4"></div>
<div class="r" style="left:312px;top:222px;width:1px;height:624px;background:#d4d4d4"></div>
<div class="r" style="left:457px;top:222px;width:1px;height:624px;background:#d4d4d4"></div>
<div class="r" style="left:602px;top:222px;width:1px;height:624px;background:#d4d4d4"></div>
<div class="r" style="left:666px;top:222px;width:1px;height:624px;background:#d4d4d4"></div>
<div class="r" style="left:730px;top:222px;width:1px;height:624px;background:#d4d4d4"></div>
<div class="r" style="left:794px;top:222px;width:1px;height:624px;background:#d4d4d4"></div>
<div class="r" style="left:858px;top:222px;width:1px;height:624px;background:#d4d4d4"></div>
<div class="r" style="left:922px;top:222px;width:1px;height:624px;background:#d4d4d4"></div>
<div class="r" style="left:986px;top:222px;width:1px;height:624px;background:#d4d4d4"></div>
<div class="r" style="left:1050px;top:222px;width:1px;height:624px;background:#d4d4d4"></div>
<div class="r" style="left:1114px;top:222px;width:1px;height:624px;background:#d4d4d4"></div>
<div class="r" style="left:1178px;top:222px;width:1px;height:624px;background:#d4d4d4"></div>
<div class="r" style="left:1242px;top:222px;width:1px;height:624px;background:#d4d4d4"></div>
<div class="r" style="left:1306px;top:222px;width:1px;height:624px;background:#d4d4d4"></div>
<div class="r" style="left:28px;top:222px;width:574px;height:25px;background:#fff"></div>
<div class="r" style="left:28px;top:248px;width:574px;height:25px;background:#fff"></div>
<div class="r" style="left:28px;top:274px;width:574px;height:25px;background:#fff"></div>
<div class="r" style="left:28px;top:300px;width:574px;height:25px;background:#fff"></div>
<div class="r" style="left:28px;top:352px;width:284px;height:51px;background:#fff"></div>
<div class="r" style="left:313px;top:352px;width:289px;height:25px;background:#fff"></div>
<div class="r" style="left:312px;top:205px;width:1px;height:16px;background:#b4b4b4"></div>
<span class="t" style="left:165.55px;top:207.00px;font-size:13.33px;color:#222">A</span>
<div class="r" style="left:457px;top:205px;width:1px;height:16px;background:#b4b4b4"></div>
<span class="t" style="left:380.55px;top:207.00px;font-size:13.33px;color:#222">B</span>
<div class="r" style="left:602px;top:205px;width:1px;height:16px;background:#b4b4b4"></div>
<span class="t" style="left:525.18px;top:207.00px;font-size:13.33px;color:#222">C</span>
<div class="r" style="left:666px;top:205px;width:1px;height:16px;background:#b4b4b4"></div>
<span class="t" style="left:629.68px;top:207.00px;font-size:13.33px;color:#222">D</span>
<div class="r" style="left:730px;top:205px;width:1px;height:16px;background:#b4b4b4"></div>
<span class="t" style="left:694.05px;top:207.00px;font-size:13.33px;color:#222">E</span>
<div class="r" style="left:794px;top:205px;width:1px;height:16px;background:#b4b4b4"></div>
<span class="t" style="left:758.42px;top:207.00px;font-size:13.33px;color:#222">F</span>
<div class="r" style="left:858px;top:205px;width:1px;height:16px;background:#b4b4b4"></div>
<span class="t" style="left:821.31px;top:207.00px;font-size:13.33px;color:#222">G</span>
<div class="r" style="left:922px;top:205px;width:1px;height:16px;background:#b4b4b4"></div>
<span class="t" style="left:885.68px;top:207.00px;font-size:13.33px;color:#222">H</span>
<div class="r" style="left:986px;top:205px;width:1px;height:16px;background:#b4b4b4"></div>
<span class="t" style="left:952.65px;top:207.00px;font-size:13.33px;color:#222">I</span>
<div class="r" style="left:1050px;top:205px;width:1px;height:16px;background:#b4b4b4"></div>
<span class="t" style="left:1015.16px;top:207.00px;font-size:13.33px;color:#222">J</span>
<div class="r" style="left:1114px;top:205px;width:1px;height:16px;background:#b4b4b4"></div>
<span class="t" style="left:1078.05px;top:207.00px;font-size:13.33px;color:#222">K</span>
<div class="r" style="left:1178px;top:205px;width:1px;height:16px;background:#b4b4b4"></div>
<span class="t" style="left:1142.79px;top:207.00px;font-size:13.33px;color:#222">L</span>
<div class="r" style="left:1242px;top:205px;width:1px;height:16px;background:#b4b4b4"></div>
<span class="t" style="left:1204.95px;top:207.00px;font-size:13.33px;color:#222">M</span>
<div class="r" style="left:1306px;top:205px;width:1px;height:16px;background:#b4b4b4"></div>
<span class="t" style="left:1269.68px;top:207.00px;font-size:13.33px;color:#222">N</span>
<div class="r" style="left:1307px;top:205px;width:37px;height:15px;background:#d2d2d2"></div>
<span class="t" style="left:1334.12px;top:207.00px;font-size:13.33px;color:#217346">O</span>
<div class="r" style="left:27px;top:205px;width:1px;height:16px;background:#b4b4b4"></div>
<svg class="r" style="left:15px;top:209px" width="10" height="10" viewBox="0 0 10 10"><path d="M9.5 0.500v9h-9z" fill="#b7b7b7"/></svg>
<div class="r" style="left:2px;top:247px;width:26px;height:1px;background:#b4b4b4"></div>
<span class="t" style="left:11.09px;top:233.00px;font-size:13.33px;color:#222">1</span>
<div class="r" style="left:2px;top:273px;width:26px;height:1px;background:#b4b4b4"></div>
<span class="t" style="left:11.09px;top:259.00px;font-size:13.33px;color:#222">2</span>
<div class="r" style="left:2px;top:299px;width:26px;height:1px;background:#b4b4b4"></div>
<span class="t" style="left:11.09px;top:285.00px;font-size:13.33px;color:#222">3</span>
<div class="r" style="left:2px;top:325px;width:26px;height:1px;background:#b4b4b4"></div>
<span class="t" style="left:11.09px;top:311.00px;font-size:13.33px;color:#222">4</span>
<div class="r" style="left:2px;top:351px;width:26px;height:1px;background:#b4b4b4"></div>
<span class="t" style="left:11.09px;top:337.00px;font-size:13.33px;color:#222">5</span>
<div class="r" style="left:2px;top:377px;width:26px;height:1px;background:#b4b4b4"></div>
<span class="t" style="left:11.09px;top:363.00px;font-size:13.33px;color:#222">6</span>
<div class="r" style="left:2px;top:403px;width:26px;height:1px;background:#b4b4b4"></div>
<span class="t" style="left:11.09px;top:389.00px;font-size:13.33px;color:#222">7</span>
<div class="r" style="left:2px;top:429px;width:26px;height:1px;background:#b4b4b4"></div>
<span class="t" style="left:11.09px;top:415.00px;font-size:13.33px;color:#222">8</span>
<div class="r" style="left:2px;top:455px;width:26px;height:1px;background:#b4b4b4"></div>
<span class="t" style="left:11.09px;top:441.00px;font-size:13.33px;color:#222">9</span>
<div class="r" style="left:2px;top:481px;width:26px;height:1px;background:#b4b4b4"></div>
<span class="t" style="left:7.39px;top:467.00px;font-size:13.33px;color:#222">10</span>
<div class="r" style="left:2px;top:507px;width:26px;height:1px;background:#b4b4b4"></div>
<span class="t" style="left:7.88px;top:493.00px;font-size:13.33px;color:#222">11</span>
<div class="r" style="left:2px;top:533px;width:26px;height:1px;background:#b4b4b4"></div>
<span class="t" style="left:7.39px;top:519.00px;font-size:13.33px;color:#222">12</span>
<div class="r" style="left:2px;top:559px;width:26px;height:1px;background:#b4b4b4"></div>
<span class="t" style="left:7.39px;top:545.00px;font-size:13.33px;color:#222">13</span>
<div class="r" style="left:2px;top:585px;width:26px;height:1px;background:#b4b4b4"></div>
<span class="t" style="left:7.39px;top:571.00px;font-size:13.33px;color:#222">14</span>
<div class="r" style="left:2px;top:611px;width:26px;height:1px;background:#b4b4b4"></div>
<span class="t" style="left:7.39px;top:597.00px;font-size:13.33px;color:#222">15</span>
<div class="r" style="left:2px;top:612px;width:24px;height:25px;background:#d2d2d2"></div>
<div class="r" style="left:2px;top:637px;width:24px;height:1px;background:#b4b4b4"></div>
<span class="t" style="left:7.39px;top:623.00px;font-size:13.33px;color:#217346">16</span>
<div class="r" style="left:2px;top:663px;width:26px;height:1px;background:#b4b4b4"></div>
<span class="t" style="left:7.39px;top:649.00px;font-size:13.33px;color:#222">17</span>
<div class="r" style="left:2px;top:689px;width:26px;height:1px;background:#b4b4b4"></div>
<span class="t" style="left:7.39px;top:675.00px;font-size:13.33px;color:#222">18</span>
<div class="r" style="left:2px;top:715px;width:26px;height:1px;background:#b4b4b4"></div>
<span class="t" style="left:7.39px;top:701.00px;font-size:13.33px;color:#222">19</span>
<div class="r" style="left:2px;top:741px;width:26px;height:1px;background:#b4b4b4"></div>
<span class="t" style="left:7.39px;top:727.00px;font-size:13.33px;color:#222">20</span>
<div class="r" style="left:2px;top:767px;width:26px;height:1px;background:#b4b4b4"></div>
<span class="t" style="left:7.39px;top:753.00px;font-size:13.33px;color:#222">21</span>
<div class="r" style="left:2px;top:793px;width:26px;height:1px;background:#b4b4b4"></div>
<span class="t" style="left:7.39px;top:779.00px;font-size:13.33px;color:#222">22</span>
<div class="r" style="left:2px;top:819px;width:26px;height:1px;background:#b4b4b4"></div>
<span class="t" style="left:7.39px;top:805.00px;font-size:13.33px;color:#222">23</span>
<div class="r" style="left:2px;top:845px;width:26px;height:1px;background:#b4b4b4"></div>
<span class="t" style="left:7.39px;top:831.00px;font-size:13.33px;color:#222">24</span>
<span class="t" style="left:30.20px;top:227.00px;font-size:16px;color:#000;font-family:'Liberation Serif',serif;letter-spacing:-0.175px">PHÒNG GIÁO DỤC VÀ ĐÀO TẠO TP MISA</span>
<span class="t" style="left:30.20px;top:253.00px;font-size:16px;color:#000;font-family:'Liberation Serif',serif;font-weight:bold;letter-spacing:-0.163px">TRƯỜNG TIỂU HỌC MISA</span>
<span class="t" style="left:47.39px;top:278.00px;font-size:18.67px;color:#000;font-family:'Liberation Serif',serif;font-weight:bold;letter-spacing:0.178px">THỐNG KÊ CHẤT LƯỢNG GIÁO DỤC TIỂU HỌC HỌC SINH</span>
<span class="t" style="left:198.01px;top:305.00px;font-size:16px;color:#000;font-family:'Liberation Serif',serif;letter-spacing:-0.176px">Giữa học kỳ II - Năm học 2020-2021</span>
<div class="r" style="left:28px;top:351px;width:575px;height:1px;background:#000"></div><div class="r" style="left:313px;top:377px;width:290px;height:1px;background:#000"></div><div class="r" style="left:28px;top:403px;width:575px;height:1px;background:#000"></div><div class="r" style="left:28px;top:429px;width:575px;height:1px;background:#000"></div><div class="r" style="left:28px;top:455px;width:575px;height:1px;background:#000"></div><div class="r" style="left:28px;top:481px;width:575px;height:1px;background:#000"></div><div class="r" style="left:28px;top:507px;width:575px;height:1px;background:#000"></div><div class="r" style="left:28px;top:533px;width:575px;height:1px;background:#000"></div><div class="r" style="left:28px;top:559px;width:575px;height:1px;background:#000"></div><div class="r" style="left:28px;top:585px;width:575px;height:1px;background:#000"></div><div class="r" style="left:28px;top:611px;width:575px;height:1px;background:#000"></div><div class="r" style="left:28px;top:637px;width:575px;height:1px;background:#000"></div><div class="r" style="left:28px;top:663px;width:575px;height:1px;background:#000"></div><div class="r" style="left:28px;top:689px;width:575px;height:1px;background:#000"></div><div class="r" style="left:28px;top:715px;width:575px;height:1px;background:#000"></div><div class="r" style="left:28px;top:741px;width:575px;height:1px;background:#000"></div><div class="r" style="left:28px;top:767px;width:575px;height:1px;background:#000"></div><div class="r" style="left:28px;top:793px;width:575px;height:1px;background:#000"></div><div class="r" style="left:28px;top:819px;width:575px;height:1px;background:#000"></div><div class="r" style="left:28px;top:845px;width:575px;height:1px;background:#000"></div><div class="r" style="left:312px;top:351px;width:1px;height:495px;background:#000"></div><div class="r" style="left:457px;top:377px;width:1px;height:469px;background:#000"></div><div class="r" style="left:602px;top:351px;width:1px;height:495px;background:#000"></div>
<div class="r" style="left:2px;top:221px;width:1343px;height:1px;background:#9e9e9e"></div><div class="r" style="left:27px;top:222px;width:1px;height:624px;background:#9e9e9e"></div><div class="r" style="left:1344px;top:222px;width:1px;height:624px;background:#9e9e9e"></div>
<div class="r" style="left:1306px;top:220px;width:39px;height:2px;background:#217346"></div><div class="r" style="left:26px;top:611px;width:2px;height:27px;background:#217346"></div>
<span class="t" style="left:410.95px;top:358.00px;font-size:13.33px;color:#000;font-family:'Liberation Serif',serif;letter-spacing:0.109px">Tổng số học sinh</span>
<span class="t" style="left:363.09px;top:384.00px;font-size:13.33px;color:#000;font-family:'Liberation Serif',serif;letter-spacing:0.082px">Tổng số</span>
<span class="t" style="left:510.19px;top:384.00px;font-size:13.33px;color:#000;font-family:'Liberation Serif',serif;letter-spacing:-0.429px">Tỷ lệ %</span>
<span class="t" style="left:30.00px;top:410.00px;font-size:13.33px;color:#000;font-family:'Liberation Serif',serif;letter-spacing:0.122px">Tổng số học sinh</span>
<span class="t" style="left:30.00px;top:436.00px;font-size:13.33px;color:#000;font-family:'Liberation Serif',serif;font-weight:bold;letter-spacing:-0.593px">I. Kết quả học tập</span>
<span class="t" style="left:30.00px;top:462.00px;font-size:13.33px;color:#000;font-family:'Liberation Serif',serif;letter-spacing:-0.035px">1. Toán</span>
<span class="t" style="left:36.00px;top:488.00px;font-size:13.33px;color:#000;font-family:'Liberation Serif',serif;letter-spacing:0.106px">Hoàn thành tốt</span>
<span class="t" style="left:36.00px;top:514.00px;font-size:13.33px;color:#000;font-family:'Liberation Serif',serif;letter-spacing:0.109px">Hoàn thành</span>
<span class="t" style="left:36.20px;top:540.00px;font-size:13.33px;color:#000;font-family:'Liberation Serif',serif;letter-spacing:0.054px">Chưa hoàn thành</span>
<span class="t" style="left:30.00px;top:566.00px;font-size:13.33px;color:#000;font-family:'Liberation Serif',serif;letter-spacing:-0.166px">2. Tiếng Việt</span>
<span class="t" style="left:36.00px;top:592.00px;font-size:13.33px;color:#000;font-family:'Liberation Serif',serif;letter-spacing:0.106px">Hoàn thành tốt</span>
<span class="t" style="left:36.00px;top:618.00px;font-size:13.33px;color:#000;font-family:'Liberation Serif',serif;letter-spacing:0.109px">Hoàn thành</span>
<span class="t" style="left:36.20px;top:644.00px;font-size:13.33px;color:#000;font-family:'Liberation Serif',serif;letter-spacing:0.054px">Chưa hoàn thành</span>
<span class="t" style="left:30.00px;top:670.00px;font-size:13.33px;color:#000;font-family:'Liberation Serif',serif;letter-spacing:-0.217px">3. Đạo đức</span>
<span class="t" style="left:36.00px;top:696.00px;font-size:13.33px;color:#000;font-family:'Liberation Serif',serif;letter-spacing:0.106px">Hoàn thành tốt</span>
<span class="t" style="left:36.00px;top:722.00px;font-size:13.33px;color:#000;font-family:'Liberation Serif',serif;letter-spacing:0.109px">Hoàn thành</span>
<span class="t" style="left:36.20px;top:748.00px;font-size:13.33px;color:#000;font-family:'Liberation Serif',serif;letter-spacing:0.054px">Chưa hoàn thành</span>
<span class="t" style="left:30.00px;top:774.00px;font-size:13.33px;color:#000;font-family:'Liberation Serif',serif;letter-spacing:-0.140px">4. Tự nhiên và Xã hội</span>
<span class="t" style="left:36.00px;top:800.00px;font-size:13.33px;color:#000;font-family:'Liberation Serif',serif;letter-spacing:0.106px">Hoàn thành tốt</span>
<span class="t" style="left:36.00px;top:826.00px;font-size:13.33px;color:#000;font-family:'Liberation Serif',serif;letter-spacing:0.109px">Hoàn thành</span>
<div class="r" style="left:1345px;top:222px;width:21px;height:624px;background:#e6e6e6"></div>
<div class="r" style="left:1348px;top:222px;width:15px;height:624px;background:#dcdcdc"></div>
<div class="r" style="left:1348px;top:207px;width:15px;height:15px;background:#fff;border:1px solid #ababab"></div>
<svg class="r" style="left:1351px;top:211px" width="9" height="6" viewBox="0 0 9 6"><path d="M0.500 5.500L4.500 1l4 4.500z" fill="#777"/></svg>
<div class="r" style="left:1348px;top:222px;width:15px;height:129px;background:#fff;border:1px solid #ababab"></div>
<div class="r" style="left:1348px;top:832px;width:15px;height:14px;background:#fff;border:1px solid #ababab"></div>
<svg class="r" style="left:1351px;top:837px" width="9" height="6" viewBox="0 0 9 6"><path d="M0.500 0.500h8L4.500 5z" fill="#777"/></svg>
<div class="r" style="left:2px;top:846px;width:1364px;height:28px;background:#e6e6e6"></div>
<div class="r" style="left:2px;top:874px;width:1364px;height:1px;background:#c8c8c8"></div>
<div class="r" style="left:2px;top:875px;width:1364px;height:21px;background:#f3f3f3"></div>
<svg class="r" style="left:28px;top:855px" width="6" height="9" viewBox="0 0 6 9"><path d="M5 0.500v8L0.500 4.500z" fill="#c0c0c0"/></svg>
<svg class="r" style="left:57px;top:855px" width="6" height="9" viewBox="0 0 6 9"><path d="M1 0.500v8L5.500 4.500z" fill="#c0c0c0"/></svg>
<div class="r" style="left:102px;top:850px;width:1px;height:20px;background:#ababab"></div>
<span class="t" style="left:115.00px;top:853.00px;font-size:13px;color:#555;letter-spacing:-0.586px">TT27</span>
<div class="r" style="left:155px;top:846px;width:102px;height:28px;background:#fff"></div>
<div class="r" style="left:157px;top:869px;width:102px;height:2px;background:#217346"></div>
<div class="r" style="left:258px;top:848px;width:1px;height:22px;background:#ababab"></div>
<div class="r" style="left:154px;top:845px;width:103px;height:29px;border:3px solid #f0393e"></div>
<span class="t" style="left:168.50px;top:853.00px;font-size:13px;color:#217346;font-weight:bold;letter-spacing:-0.040px">TT27 (hs nu)</span>
<span class="t" style="left:271.50px;top:853.00px;font-size:13px;color:#555;letter-spacing:-0.786px">TT22</span>
<div class="r" style="left:366px;top:850px;width:1px;height:20px;background:#ababab"></div>
<span class="t" style="left:378.54px;top:853.00px;font-size:13px;color:#555;letter-spacing:-0.318px">TT22 (hs nu)</span>
<div class="r" style="left:462px;top:850px;width:1px;height:20px;background:#ababab"></div>
<svg class="r" style="left:491px;top:851px" width="18" height="18" viewBox="0 0 18 18"><circle cx="9" cy="9" r="7.400" fill="none" stroke="#777" stroke-width="1.200"/><path d="M9 5v8M5 9h8" stroke="#777" stroke-width="1.600"/></svg>
<div class="r" style="left:820px;top:855px;width:2px;height:2px;background:#a6a6a6"></div>
<div class="r" style="left:820px;top:859px;width:2px;height:2px;background:#a6a6a6"></div>
<div class="r" style="left:820px;top:863px;width:2px;height:2px;background:#a6a6a6"></div>
<div class="r" style="left:837px;top:853px;width:15px;height:15px;background:#fff;border:1px solid #ababab"></div>
<svg class="r" style="left:842px;top:856px" width="6" height="9" viewBox="0 0 6 9"><path d="M5.500 0.500v8L1 4.500z" fill="#666"/></svg>
<div class="r" style="left:852px;top:853px;width:478px;height:15px;background:#dcdcdc"></div>
<div class="r" style="left:852px;top:853px;width:441px;height:15px;background:#fff;border:1px solid #ababab"></div>
<div class="r" style="left:1332px;top:853px;width:15px;height:15px;background:#fff;border:1px solid #ababab"></div>
<svg class="r" style="left:1337px;top:856px" width="6" height="9" viewBox="0 0 6 9"><path d="M0.500 0.500v8L5 4.500z" fill="#666"/></svg>
<span class="t" style="left:10.50px;top:878.00px;font-size:12px;color:#444;letter-spacing:-0.838px">Ready</span>
<div class="r" style="left:1069px;top:875px;width:38px;height:21px;background:#c6c6c6"></div>
<svg class="r" style="left:1080px;top:878px" width="15" height="14" viewBox="0 0 15 14"><path d="M0.500 0.500h13v12h-13zM0.500 4.500h13M0.500 8.500h13M4.800 0.500v12M9.200 0.500v12" fill="none" stroke="#5a5a5a" stroke-width="1.200"/></svg>
<svg class="r" style="left:1119px;top:878px" width="15" height="14" viewBox="0 0 15 14"><g shape-rendering="crispEdges"><path d="M0.500 0.500h13v12h-13z" fill="none" stroke="#6a6a6a"/><path d="M3.500 3.500h7v6h-7zM5 5.500h4M5 7.500h4" fill="none" stroke="#6a6a6a"/></g></svg>
<svg class="r" style="left:1157px;top:878px" width="15" height="14" viewBox="0 0 15 14"><path d="M0.500 0.500h13v12h-13zM4.500 0.500v6h4v-6M0.500 6.500h13" fill="none" stroke="#6a6a6a" shape-rendering="crispEdges"/></svg>
<div class="r" style="left:1188px;top:884px;width:7px;height:2px;background:#555"></div>
<div class="r" style="left:1198px;top:885px;width:100px;height:1px;background:#8a8a8a"></div>
<div class="r" style="left:1246px;top:879px;width:5px;height:12px;background:#666"></div>
<div class="r" style="left:1301px;top:884px;width:8px;height:2px;background:#555"></div>
<div class="r" style="left:1304px;top:881px;width:2px;height:8px;background:#555"></div>
<span class="t" style="left:1320.40px;top:878.00px;font-size:12px;color:#444;letter-spacing:-1.101px">100%</span>
</div></div>
<div class="win" style="left:304px;top:354px">
<div class="in">
<div class="r" style="left:1px;top:1px;width:1366px;height:896px;border:1px solid #217346"></div>
<div class="r" style="left:1px;top:1px;width:1366px;height:65px;background:#217346"></div>
<div class="r" style="left:63px;top:36px;width:58px;height:30px;background:#f3f3f3"></div>
<div class="r" style="left:2px;top:66px;width:1364px;height:92px;background:#f3f3f3"></div>
<div class="r" style="left:2px;top:158px;width:1364px;height:1px;background:#d2d2d2"></div>
<div class="r" style="left:2px;top:159px;width:1364px;height:63px;background:#e6e6e6"></div>
<svg class="r" style="left:23px;top:11px" width="16" height="16" viewBox="0 0 16 16"><rect x="1.200" y="1" width="13.800" height="13.800" rx="0.600" fill="#fff"/><rect x="3.300" y="1.600" width="9.700" height="6.800" fill="#217346"/><rect x="3.700" y="10.700" width="8.700" height="3.200" fill="#217346"/><rect x="6" y="11.900" width="2" height="2" fill="#fff"/></svg>
<svg class="r" style="left:52px;top:11px" width="17" height="16" viewBox="0 0 17 16"><path d="M8.100 1.300L2 5.700l5.800 4.100" fill="none" stroke="#fff" stroke-width="2.200"/><path d="M2.600 5.700h7.200c2.600 0 4.200 1.700 4.200 3.700 0 2.200-1.800 3.800-4.400 4.100" fill="none" stroke="#fff" stroke-width="2.200"/></svg>
<svg class="r" style="left:72px;top:16px" width="7" height="5" viewBox="0 0 7 5"><path d="M1 1h5l-2.5 3z" fill="#fff"/></svg>
<svg class="r" style="left:87px;top:11px" width="17" height="16" viewBox="0 0 17 16"><g opacity="0.300"><path d="M8.900 1.300L15 5.700l-5.800 4.100" fill="none" stroke="#fff" stroke-width="2.200"/><path d="M14.400 5.700H7.200c-2.600 0-4.200 1.700-4.200 3.700 0 2.200 1.800 3.800 4.400 4.100" fill="none" stroke="#fff" stroke-width="2.200"/></g></svg>
<svg class="r" style="left:107px;top:16px" width="7" height="5" viewBox="0 0 7 5"><path d="M1 1h5l-2.500 3z" fill="#fff" opacity="0.300"/></svg>
<svg class="r" style="left:126px;top:15px" width="7" height="8" viewBox="0 0 7 8"><path d="M0.500 1.600h6" stroke="#fff" stroke-width="1.200"/><path d="M0.500 3.800h6l-3 3.400z" fill="#fff"/></svg>
<span class="t" style="left:499.60px;top:13.00px;font-size:12px;color:#fff">Thống kê chất lượng giáo dục tiểu học  [Compatibility Mode]  -  Excel</span>
<span class="t" style="left:1014.40px;top:12.00px;font-size:12px;color:#fff;letter-spacing:-0.380px">PHUONG1 TRINH THI THANH</span>
<svg class="r" style="left:1198px;top:12px" width="14" height="11" viewBox="0 0 14 11"><g shape-rendering="crispEdges" fill="none" stroke="#fff"><rect x="0.500" y="0.500" width="12" height="9"/><path d="M0.500 2.500h12"/><path d="M6.500 8V4.500"/></g><path d="M4.500 6.300l2-2 2 2" fill="none" stroke="#fff"/></svg>
<div class="r" style="left:1246px;top:17px;width:11px;height:1px;background:#fff"></div>
<div class="r" style="left:1292px;top:12px;width:10px;height:10px;border:1px solid #fff"></div>
<svg class="r" style="left:1337px;top:11px" width="12" height="12" viewBox="0 0 12 12"><path d="M1 1l10 10M11 1L1 11" stroke="#fff" stroke-width="1.1" fill="none"/></svg>
<span class="t" style="left:22.10px;top:44.00px;font-size:13px;color:#fff;letter-spacing:-0.713px">File</span>
<span class="t" style="left:135.20px;top:44.00px;font-size:13px;color:#fff;letter-spacing:-0.653px">Insert</span>
<span class="t" style="left:191.50px;top:44.00px;font-size:13px;color:#fff;letter-spacing:-0.792px">Page Layout</span>
<span class="t" style="left:283.40px;top:44.00px;font-size:13px;color:#fff;letter-spacing:-0.673px">Formulas</span>
<span class="t" style="left:359.80px;top:44.00px;font-size:13px;color:#fff;letter-spacing:-1.142px">Data</span>
<span class="t" style="left:410.00px;top:44.00px;font-size:13px;color:#fff;letter-spacing:-0.938px">Review</span>
<span class="t" style="left:474.10px;top:44.00px;font-size:13px;color:#fff;letter-spacing:-0.713px">View</span>
<span class="t" style="left:526.10px;top:44.00px;font-size:13px;color:#fff;letter-spacing:-0.340px">Add-ins</span>
<span class="t" style="left:595.50px;top:44.00px;font-size:13px;color:#fff;letter-spacing:-0.562px">Help</span>
<span class="t" style="left:647.50px;top:44.00px;font-size:13px;color:#fff;letter-spacing:-1.174px">Team</span>
<span class="t" style="left:75.40px;top:44.00px;font-size:13px;color:#217346;letter-spacing:-0.447px">Home</span>
<svg class="r" style="left:702px;top:42px" width="13" height="18" viewBox="0 0 13 18"><path d="M6.5 1.2a4.6 4.6 0 0 0-2.9 8.2c0.7 0.7 1 1.5 1 2.6h3.8c0-1.1 0.3-1.9 1-2.6A4.6 4.6 0 0 0 6.5 1.2z" fill="none" stroke="#fff" stroke-width="1.1"/><path d="M4.6 13.8h3.8M5 15.8h3" stroke="#fff" stroke-width="1.1"/></svg>
<span class="t" style="left:720.90px;top:44.00px;font-size:13px;color:#fff;letter-spacing:-0.419px">Tell me what you want to do</span>
<svg class="r" style="left:1293px;top:42px" width="17" height="18" viewBox="0 0 17 18"><circle cx="7.900" cy="6" r="4.200" fill="none" stroke="#fff" stroke-width="1.200"/><path d="M1.200 16.800c0.300-3.600 2.200-5.800 4.600-6.400" fill="none" stroke="#fff" stroke-width="1.200"/><path d="M9.800 10.200c0.700 0.200 1.300 0.500 1.800 0.900" fill="none" stroke="#fff" stroke-width="1.200"/><path d="M12.500 9.500v7M9 13h7" stroke="#fff" stroke-width="1.100" shape-rendering="crispEdges"/></svg>
<span class="t" style="left:1313.40px;top:44.00px;font-size:13px;color:#fff;letter-spacing:-1.200px">Share</span>
<svg class="r" style="left:14px;top:72px" width="31" height="33" viewBox="0 0 31 33"><rect x="1" y="5" width="24" height="25" rx="1.500" fill="#eac282"/><rect x="6" y="3.200" width="14" height="5.400" rx="1" fill="#6d6d6d"/><rect x="10.400" y="1" width="5.200" height="4" rx="1.400" fill="#6d6d6d"/><rect x="12.200" y="2.600" width="1.600" height="1.600" fill="#f3f3f3"/><path d="M15.500 13.500h8.500l4.500 4.500v13.500h-13z" fill="#fff" stroke="#6d6d6d"/><path d="M24 13.500v4.500h4.500" fill="none" stroke="#6d6d6d"/></svg>
<span class="t" style="left:13.40px;top:109.00px;font-size:12px;color:#3c3c3c;letter-spacing:-0.577px">Paste</span>
<svg class="r" style="left:23px;top:128px" width="7" height="5" viewBox="0 0 7 5"><path d="M1 1h5l-2.5 3z" fill="#666"/></svg>
<svg class="r" style="left:51px;top:72px" width="16" height="16" viewBox="0 0 16 16"><path d="M4.200 0.600l5.800 9.800M11.400 0.600l-5.800 9.800" stroke="#5a5a5a" stroke-width="1.900" fill="none"/><circle cx="3.600" cy="12.400" r="2.400" fill="none" stroke="#3a72b8" stroke-width="1.300"/><circle cx="11.900" cy="12.400" r="2.400" fill="none" stroke="#3a72b8" stroke-width="1.300"/></svg>
<span class="t" style="left:70.60px;top:75.00px;font-size:12px;color:#3c3c3c;letter-spacing:-0.163px">Cut</span>
<svg class="r" style="left:50px;top:96px" width="17" height="15" viewBox="0 0 17 15"><path d="M1.500 0.500h4.500l2 2v8h-6.500z" fill="#fff" stroke="#6a6a6a"/><path d="M3 4.500h2M3 6.500h2M3 8.500h2" stroke="#3a72b8" stroke-width="1"/><path d="M7.500 3.500h5l3 3v7.500h-8z" fill="#fff" stroke="#6a6a6a"/><path d="M12.500 3.500v3h3" fill="none" stroke="#6a6a6a"/><path d="M9 8.500h5M9 10.500h5M9 12.500h5" stroke="#3a72b8" stroke-width="1"/></svg>
<span class="t" style="left:70.60px;top:98.00px;font-size:12px;color:#3c3c3c;letter-spacing:-0.204px">Copy</span>
<svg class="r" style="left:107px;top:101px" width="7" height="5" viewBox="0 0 7 5"><path d="M1 1h5l-2.5 3z" fill="#666"/></svg>
<svg class="r" style="left:51px;top:118px" width="17" height="16" viewBox="0 0 17 16"><path d="M0.200 7.800l6.200-3.300 4.800 4.700-4.800 5.300z" fill="#eac282"/><path d="M6.400 4.500l3.800-2.500 4.800 5.800-3.800 1.900z" fill="#6a6a6a"/><path d="M11.700 3l3.300-2 1 1.500-2.700 2.900z" fill="#6a6a6a"/></svg>
<span class="t" style="left:70.60px;top:121.00px;font-size:12px;color:#3c3c3c;letter-spacing:-0.140px">Format Painter</span>
<span class="t" style="left:47.50px;top:144.00px;font-size:12px;color:#3c3c3c;letter-spacing:-0.119px">Clipboard</span>
<svg class="r" style="left:148px;top:147px" width="8" height="8" viewBox="0 0 8 8"><path d="M0.500 5.500V0.500H5.500" fill="none" stroke="#777"/><path d="M2.600 2.600l3.600 3.600" fill="none" stroke="#777"/><path d="M7 3.400V7H3.400z" fill="#777"/></svg>
<div class="r" style="left:159px;top:70px;width:1px;height:84px;background:#d6d6d6"></div>
<div class="r" style="left:164px;top:77px;width:111px;height:23px;background:#fff;border:1px solid #c6c6c6"></div>
<div class="r" style="left:275px;top:77px;width:43px;height:23px;background:#fff;border:1px solid #c6c6c6"></div>
<span class="t" style="left:167.20px;top:83.00px;font-size:12px;color:#3c3c3c;letter-spacing:-0.083px">Arial</span>
<svg class="r" style="left:264px;top:86px" width="7" height="5" viewBox="0 0 7 5"><path d="M1 1h5l-2.5 3z" fill="#666"/></svg>
<span class="t" style="left:278.60px;top:83.00px;font-size:12px;color:#3c3c3c;letter-spacing:-0.980px">10</span>
<svg class="r" style="left:307px;top:86px" width="7" height="5" viewBox="0 0 7 5"><path d="M1 1h5l-2.5 3z" fill="#666"/></svg>
<span class="t" style="left:324.30px;top:82.00px;font-size:14.5px;color:#444">A</span>
<svg class="r" style="left:332px;top:80px" width="6" height="4" viewBox="0 0 6 4"><path d="M0 3.800l2.700-3 2.700 3z" fill="#2e74b5"/></svg>
<span class="t" style="left:347.20px;top:85.00px;font-size:10.5px;color:#444;-webkit-text-stroke:0.25px #444">A</span>
<svg class="r" style="left:354px;top:81px" width="6" height="4" viewBox="0 0 6 4"><path d="M0 0h5.400l-2.700 3z" fill="#2e74b5"/></svg>
<span class="t" style="left:170.20px;top:114.00px;font-size:12.5px;color:#444;font-weight:bold">B</span>
<span class="t" style="left:193.00px;top:112.00px;font-size:13.5px;color:#444;font-family:'Liberation Serif',serif;font-weight:bold;font-style:italic">I</span>
<span class="t" style="left:213.90px;top:113.00px;font-size:12px;color:#444;font-weight:bold">U</span>
<div class="r" style="left:214px;top:125px;width:9px;height:1px;background:#444"></div>
<svg class="r" style="left:232px;top:117px" width="7" height="5" viewBox="0 0 7 5"><path d="M1 1h5l-2.5 3z" fill="#666"/></svg>
<div class="r" style="left:246px;top:109px;width:1px;height:21px;background:#d0d0d0"></div>
<svg class="r" style="left:255px;top:112px" width="13" height="13" viewBox="0 0 13 13"><g shape-rendering="crispEdges" fill="none" stroke="#777" stroke-dasharray="1 1"><path d="M0 0.500h13M0 6.500h13M0.500 0v12M6.500 0v12M12.500 0v12"/></g><path d="M0 12.400h13" stroke="#555" stroke-width="1.200" shape-rendering="crispEdges"/></svg>
<svg class="r" style="left:275px;top:117px" width="7" height="5" viewBox="0 0 7 5"><path d="M1 1h5l-2.5 3z" fill="#666"/></svg>
<div class="r" style="left:289px;top:109px;width:1px;height:21px;background:#d0d0d0"></div>
<svg class="r" style="left:296px;top:110px" width="18" height="17" viewBox="0 0 18 17"><path d="M6.4 3.2l6.4 6.2-4.8 3.6-5.4-5.2z" fill="#fff" stroke="#555" stroke-width="1.1"/><path d="M6.6 5V1.6a1.3 1.3 0 0 1 2.6 0v2.8" fill="none" stroke="#555" stroke-width="1"/><path d="M13.2 6.6c1.8 1.2 2.4 3 1.4 5-0.3-1.6-1.2-2.6-2.6-3z" fill="#2e74b5"/><rect x="1" y="13.6" width="16" height="3.4" fill="#ffff00"/></svg>
<svg class="r" style="left:318px;top:117px" width="7" height="5" viewBox="0 0 7 5"><path d="M1 1h5l-2.5 3z" fill="#666"/></svg>
<span class="t" style="left:334.00px;top:111.00px;font-size:13.5px;color:#444;-webkit-text-stroke:0.3px #444">A</span>
<div class="r" style="left:331px;top:123px;width:16px;height:4px;background:#ff0000"></div>
<svg class="r" style="left:352px;top:117px" width="7" height="5" viewBox="0 0 7 5"><path d="M1 1h5l-2.5 3z" fill="#666"/></svg>
<span class="t" style="left:243.50px;top:144.00px;font-size:12px;color:#3c3c3c;letter-spacing:-0.254px">Font</span>
<svg class="r" style="left:355px;top:147px" width="8" height="8" viewBox="0 0 8 8"><path d="M0.500 5.500V0.500H5.500" fill="none" stroke="#777"/><path d="M2.600 2.600l3.600 3.600" fill="none" stroke="#777"/><path d="M7 3.400V7H3.400z" fill="#777"/></svg>
<div class="r" style="left:366px;top:70px;width:1px;height:84px;background:#d6d6d6"></div>
<svg class="r" style="left:375px;top:80px" width="14" height="7" viewBox="0 0 14 7"><path d="M0 0.5h14M0 3.5h14M0 6.5h14" stroke="#6a6a6a"/></svg>
<div class="r" style="left:393px;top:77px;width:22px;height:23px;background:#c6c6c6"></div>
<svg class="r" style="left:397px;top:84px" width="14" height="7" viewBox="0 0 14 7"><path d="M0 0.5h14M0 3.5h14M0 6.5h14" stroke="#5a5a5a"/></svg>
<svg class="r" style="left:419px;top:89px" width="14" height="7" viewBox="0 0 14 7"><path d="M0 0.5h14M0 3.5h14M0 6.5h14" stroke="#6a6a6a"/></svg>
<div class="r" style="left:441px;top:78px;width:1px;height:21px;background:#d0d0d0"></div>
<svg class="r" style="left:446px;top:78px" width="21" height="19" viewBox="0 0 21 19"><path d="M9.300 16.600L18.600 7.800M15.400 7.600l3.400 0.100-0.100 3.400" fill="none" stroke="#555" stroke-width="1.300"/><text x="0" y="0" font-family="Liberation Sans,sans-serif" font-size="10.500" fill="#555" transform="translate(6.600 14.600) rotate(-47)">ab</text></svg>
<svg class="r" style="left:468px;top:86px" width="7" height="5" viewBox="0 0 7 5"><path d="M1 1h5l-2.5 3z" fill="#666"/></svg>
<div class="r" style="left:494px;top:76px;width:1px;height:55px;background:#d0d0d0"></div>
<svg class="r" style="left:503px;top:79px" width="15" height="17" viewBox="0 0 15 17"><text x="0.600" y="9.200" font-family="Liberation Sans,sans-serif" font-size="10.500" fill="#555">ab</text><text x="0.800" y="15.900" font-family="Liberation Sans,sans-serif" font-size="10.500" fill="#555">c</text><path d="M12 11v2.600H8.400M9.900 11.900l-1.700 1.700 1.700 1.700" fill="none" stroke="#2e74b5" stroke-width="1.100"/></svg>
<span class="t" style="left:521.40px;top:83.00px;font-size:12px;color:#3c3c3c;letter-spacing:-0.253px">Wrap Text</span>
<svg class="r" style="left:375px;top:114px" width="14" height="11" viewBox="0 0 14 11"><path d="M0 0.5h14M0 3.5h10M0 6.5h14M0 9.5h10" stroke="#6a6a6a"/></svg>
<svg class="r" style="left:397px;top:114px" width="14" height="11" viewBox="0 0 14 11"><path d="M0 0.5h14M2 3.5h10M0 6.5h14M2 9.5h10" stroke="#6a6a6a"/></svg>
<svg class="r" style="left:419px;top:114px" width="14" height="11" viewBox="0 0 14 11"><path d="M0 0.5h14M4 3.5h10M0 6.5h14M4 9.5h10" stroke="#6a6a6a"/></svg>
<div class="r" style="left:441px;top:109px;width:1px;height:21px;background:#d0d0d0"></div>
<svg class="r" style="left:449px;top:112px" width="16" height="14" viewBox="0 0 16 14"><path d="M0 0.500h16M8 3.500h8M8 6.500h8M8 9.500h8M0 12.500h16" stroke="#6a6a6a" shape-rendering="crispEdges"/><path d="M6.600 6.500H1.400M3.600 3.800L0.800 6.500l2.800 2.700" fill="none" stroke="#2e74b5" stroke-width="1.900"/></svg>
<svg class="r" style="left:471px;top:112px" width="16" height="14" viewBox="0 0 16 14"><path d="M0 0.500h16M8 3.500h8M8 6.500h8M8 9.500h8M0 12.500h16" stroke="#6a6a6a" shape-rendering="crispEdges"/><path d="M0.200 6.500h5.200M3.200 3.800l2.800 2.700-2.800 2.700" fill="none" stroke="#2e74b5" stroke-width="1.900"/></svg>
<svg class="r" style="left:502px;top:111px" width="16" height="15" viewBox="0 0 16 15"><path d="M0.500 0.500h14v14h-14zM0.500 3.500h14M0.500 11.500h14M7.500 0.500v3M7.500 11.500v3" fill="#fff" stroke="#6a6a6a" shape-rendering="crispEdges"/><path d="M2.800 7.500h9.400M4.400 5.900L2.800 7.500l1.600 1.600M10.600 5.900l1.600 1.600-1.600 1.600" fill="none" stroke="#2e74b5" stroke-width="1.100"/></svg>
<span class="t" style="left:521.40px;top:114.00px;font-size:12px;color:#3c3c3c;letter-spacing:-0.022px">Merge &amp; Center</span>
<svg class="r" style="left:614px;top:117px" width="7" height="5" viewBox="0 0 7 5"><path d="M1 1h5l-2.5 3z" fill="#666"/></svg>
<span class="t" style="left:464.20px;top:144.00px;font-size:12px;color:#3c3c3c;letter-spacing:-0.086px">Alignment</span>
<svg class="r" style="left:619px;top:147px" width="8" height="8" viewBox="0 0 8 8"><path d="M0.500 5.500V0.500H5.500" fill="none" stroke="#777"/><path d="M2.600 2.600l3.600 3.600" fill="none" stroke="#777"/><path d="M7 3.400V7H3.400z" fill="#777"/></svg>
<div class="r" style="left:630px;top:70px;width:1px;height:84px;background:#d6d6d6"></div>
<div class="r" style="left:635px;top:77px;width:131px;height:23px;background:#fff;border:1px solid #c6c6c6"></div>
<span class="t" style="left:638.60px;top:83.00px;font-size:12px;color:#3c3c3c;letter-spacing:-0.558px">General</span>
<svg class="r" style="left:755px;top:86px" width="7" height="5" viewBox="0 0 7 5"><path d="M1 1h5l-2.5 3z" fill="#666"/></svg>
<span class="t" style="left:642.60px;top:111.00px;font-size:15px;color:#555">$</span>
<svg class="r" style="left:659px;top:117px" width="7" height="5" viewBox="0 0 7 5"><path d="M1 1h5l-2.5 3z" fill="#666"/></svg>
<span class="t" style="left:674.50px;top:112.00px;font-size:14.5px;color:#555">%</span>
<span class="t" style="left:698.80px;top:102.00px;font-size:21px;color:#555;font-family:'Liberation Serif',serif;font-weight:bold">,</span>
<div class="r" style="left:717px;top:109px;width:1px;height:21px;background:#d0d0d0"></div>
<svg class="r" style="left:725px;top:111px" width="16" height="15" viewBox="0 0 16 15"><path d="M5 4H0.8M2.6 2L0.6 4l2 2" fill="none" stroke="#2e74b5" stroke-width="1.2"/><text x="5.6" y="6.4" font-family="Liberation Sans,sans-serif" font-size="8.300" fill="#555">.0</text><text x="2.8" y="14" font-family="Liberation Sans,sans-serif" font-size="8.300" fill="#555">.00</text></svg>
<svg class="r" style="left:746px;top:111px" width="17" height="15" viewBox="0 0 17 15"><text x="3" y="6.4" font-family="Liberation Sans,sans-serif" font-size="8.300" fill="#555">.00</text><path d="M0.6 11h4.6M3.4 9l2 2-2 2" fill="none" stroke="#2e74b5" stroke-width="1.2"/><text x="7.6" y="14" font-family="Liberation Sans,sans-serif" font-size="8.300" fill="#555">.0</text></svg>
<span class="t" style="left:672.60px;top:144.00px;font-size:12px;color:#3c3c3c;letter-spacing:-0.348px">Number</span>
<svg class="r" style="left:759px;top:147px" width="8" height="8" viewBox="0 0 8 8"><path d="M0.500 5.500V0.500H5.500" fill="none" stroke="#777"/><path d="M2.600 2.600l3.600 3.600" fill="none" stroke="#777"/><path d="M7 3.400V7H3.400z" fill="#777"/></svg>
<div class="r" style="left:770px;top:70px;width:1px;height:84px;background:#d6d6d6"></div>
<svg class="r" style="left:797px;top:74px" width="31" height="31" viewBox="0 0 31 31"><path d="M0.5 0.5h27v24h-27zM0.5 6.5h27M0.5 12.5h27M0.5 18.5h27M7.5 0.5v24M20.5 0.5v24" fill="#fff" stroke="#8a8a8a"/><rect x="8" y="1" width="6" height="5" fill="#d9623b"/><rect x="8" y="7" width="10" height="5" fill="#3f78bf"/><rect x="8" y="13" width="8" height="5" fill="#d9623b"/><rect x="8" y="19" width="4" height="5" fill="#3f78bf"/><rect x="14.5" y="17.5" width="15" height="12" fill="#fff" stroke="#6a6a6a"/><path d="M18.5 22h7M18.5 25h7M24 19.8l-4 7.4" stroke="#444" stroke-width="1" fill="none"/></svg>
<span class="t" style="left:780.40px;top:109.00px;font-size:12px;color:#3c3c3c;letter-spacing:0.105px">Conditional</span>
<span class="t" style="left:777.30px;top:125.00px;font-size:12px;color:#3c3c3c;letter-spacing:0.064px">Formatting</span>
<svg class="r" style="left:838px;top:128px" width="7" height="5" viewBox="0 0 7 5"><path d="M1 1h5l-2.5 3z" fill="#666"/></svg>
<svg class="r" style="left:862px;top:76px" width="31" height="29" viewBox="0 0 31 29"><path d="M0.5 0.5h24v19h-24z" fill="#fff" stroke="#8a8a8a"/><rect x="6.5" y="5.5" width="18" height="14" fill="#bdd3ee"/><path d="M0.5 5.5h24M0.5 10.5h24M0.5 15.5h24M6.5 0.5v19M12.5 0.5v19M18.5 0.5v19" fill="none" stroke="#8a8a8a"/><path d="M28.700 5.300l0.700 5.700-7.800 9.100-3.400-2.800z" fill="#7a7a7a"/><path d="M14.800 19c2.200-0.600 4.400 0.400 5.700 2.250 0.200 1.200-0.100 2.100-0.600 2.850-1.400 1.500-3.400 2.400-6.200 2.800-2.300 0.400-4.700 0.600-7.100 0.600 2-0.900 3.300-2 4.200-3.400 0.600-1.100 0.900-2.300 1.700-3.400 0.600-0.800 1.400-1.400 2.300-1.700z" fill="#3f78bf"/><path d="M15.600 22.600c1-0.900 2.200-1.300 3.400-1.100" stroke="#fff" stroke-width="1.100" fill="none"/></svg>
<span class="t" style="left:849.30px;top:109.00px;font-size:12px;color:#3c3c3c;letter-spacing:-0.280px">Format as</span>
<span class="t" style="left:858.30px;top:125.00px;font-size:12px;color:#3c3c3c;letter-spacing:-0.398px">Table</span>
<svg class="r" style="left:887px;top:128px" width="7" height="5" viewBox="0 0 7 5"><path d="M1 1h5l-2.5 3z" fill="#666"/></svg>
<svg class="r" style="left:911px;top:74px" width="31" height="30" viewBox="0 0 31 30"><path d="M0.5 0.5h25v21h-25z" fill="#fff" stroke="#8a8a8a"/><rect x="5.5" y="5.5" width="14" height="11" fill="#bdd3ee"/><path d="M0.5 5.500h25M0.5 16.500h25M5.5 0.500v21M19.500 0.500v21" fill="none" stroke="#8a8a8a"/><g transform="translate(0.800 0.900)"><path d="M28.700 5.300l0.700 5.700-7.800 9.100-3.400-2.800z" fill="#7a7a7a"/><path d="M14.800 19c2.200-0.600 4.400 0.400 5.700 2.250 0.200 1.200-0.100 2.100-0.600 2.850-1.400 1.500-3.400 2.400-6.200 2.800-2.300 0.400-4.700 0.600-7.100 0.600 2-0.900 3.300-2 4.200-3.400 0.600-1.100 0.900-2.300 1.700-3.400 0.600-0.800 1.400-1.400 2.300-1.700z" fill="#3f78bf"/><path d="M15.600 22.600c1-0.900 2.200-1.300 3.400-1.100" stroke="#fff" stroke-width="1.100" fill="none"/></g></svg>
<span class="t" style="left:915.30px;top:109.00px;font-size:12px;color:#3c3c3c;letter-spacing:-0.293px">Cell</span>
<span class="t" style="left:906.10px;top:125.00px;font-size:12px;color:#3c3c3c;letter-spacing:-0.481px">Styles</span>
<svg class="r" style="left:938px;top:128px" width="7" height="5" viewBox="0 0 7 5"><path d="M1 1h5l-2.5 3z" fill="#666"/></svg>
<span class="t" style="left:846.40px;top:144.00px;font-size:12px;color:#3c3c3c;letter-spacing:-0.765px">Styles</span>
<div class="r" style="left:951px;top:70px;width:1px;height:84px;background:#d6d6d6"></div>
<svg class="r" style="left:963px;top:73px" width="28" height="29" viewBox="0 0 28 29"><path d="M1.500 1.500h14v5h-14zM8.500 1.500v5" fill="#fff" stroke="#8a8a8a"/><path d="M1.500 17.500h14v10h-14zM8.500 17.500v10M1.500 22.500h14" fill="#fff" stroke="#8a8a8a"/><path d="M12.500 9.500h14v5h-14zM19.500 9.500v5" fill="#bdd3ee" stroke="#8a8a8a"/><path d="M9.600 12H2.400M5.400 9L2.200 12l3.200 3" fill="none" stroke="#3f78bf" stroke-width="1.700"/></svg>
<span class="t" style="left:962.20px;top:109.00px;font-size:12px;color:#3c3c3c;letter-spacing:-0.219px">Insert</span>
<svg class="r" style="left:973px;top:128px" width="7" height="5" viewBox="0 0 7 5"><path d="M1 1h5l-2.5 3z" fill="#666"/></svg>
<svg class="r" style="left:1004px;top:73px" width="32" height="29" viewBox="0 0 32 29"><path d="M1.500 1.500h14v5h-14zM8.500 1.500v5" fill="#fff" stroke="#8a8a8a"/><path d="M1.500 18.500h14v9h-14zM8.500 18.500v9M1.500 23h14" fill="#fff" stroke="#8a8a8a"/><path d="M7.500 9.500h11v5h-11z" fill="#bdd3ee" stroke="#8a8a8a"/><path d="M16.800 7l13 12.200M29.800 7L16.800 19.200" fill="none" stroke="#d9623b" stroke-width="2"/></svg>
<span class="t" style="left:1002.80px;top:109.00px;font-size:12px;color:#3c3c3c;letter-spacing:-0.415px">Delete</span>
<svg class="r" style="left:1015px;top:128px" width="7" height="5" viewBox="0 0 7 5"><path d="M1 1h5l-2.5 3z" fill="#666"/></svg>
<svg class="r" style="left:1046px;top:72px" width="30" height="33" viewBox="0 0 30 33"><path d="M1 3.500h21M1 0.800v5.400M22 0.800v5.400M3.800 1.400L1.400 3.500l2.400 2.100M19.200 1.400l2.400 2.100-2.400 2.100" fill="none" stroke="#3f78bf" stroke-width="1"/><path d="M1.500 8.500h27v19h-27z" fill="#fff" stroke="#8a8a8a" stroke-dasharray="1 0"/><path d="M1.500 13.500h27M1.500 22.500h27M8.500 8.500v19M15.500 8.500v19M22.500 8.500v19" fill="none" stroke="#c8c8c8"/><rect x="9" y="13" width="7" height="10" fill="#3f78bf"/><path d="M2 27.500v2.600l7 0.900 1.600-2.400h7l1.600 2.400 7-0.900v-2.600" fill="#fff" stroke="#8a8a8a"/></svg>
<span class="t" style="left:1042.60px;top:109.00px;font-size:12px;color:#3c3c3c;letter-spacing:-0.119px">Format</span>
<svg class="r" style="left:1058px;top:128px" width="7" height="5" viewBox="0 0 7 5"><path d="M1 1h5l-2.5 3z" fill="#666"/></svg>
<span class="t" style="left:1007.60px;top:144.00px;font-size:12px;color:#3c3c3c;letter-spacing:-0.714px">Cells</span>
<div class="r" style="left:1087px;top:70px;width:1px;height:84px;background:#d6d6d6"></div>
<svg class="r" style="left:1095px;top:71px" width="16" height="17" viewBox="0 0 16 17"><path d="M14.500 4.200V1.400H1.600l6.600 7-6.600 7.200h12.900v-2.800" fill="none" stroke="#444" stroke-width="1.700"/></svg>
<span class="t" style="left:1114.40px;top:75.00px;font-size:12px;color:#3c3c3c;letter-spacing:-0.008px">AutoSum</span>
<svg class="r" style="left:1173px;top:78px" width="7" height="5" viewBox="0 0 7 5"><path d="M1 1h5l-2.5 3z" fill="#666"/></svg>
<svg class="r" style="left:1096px;top:95px" width="15" height="16" viewBox="0 0 15 16"><rect x="0.500" y="0.500" width="14" height="15" fill="#fff" stroke="#6a6a6a"/><rect x="0.500" y="0.500" width="14" height="3" fill="#6a6a6a"/><path d="M7.500 5.600v6.800M4.400 9.400l3.100 3.200 3.100-3.200" fill="none" stroke="#2e74b5" stroke-width="1.700"/></svg>
<span class="t" style="left:1114.40px;top:98.00px;font-size:12px;color:#3c3c3c;letter-spacing:-0.257px">Fill</span>
<svg class="r" style="left:1131px;top:101px" width="7" height="5" viewBox="0 0 7 5"><path d="M1 1h5l-2.5 3z" fill="#666"/></svg>
<svg class="r" style="left:1096px;top:118px" width="14" height="15" viewBox="0 0 14 15"><path d="M9.200 1.200l4 4-7 7.400-4-4z" fill="#ee7a8e"/><path d="M2.200 8.600l4 4-1.400 1.400H2.600L0.800 12z" fill="#f7c3cb"/></svg>
<span class="t" style="left:1114.40px;top:121.00px;font-size:12px;color:#3c3c3c;letter-spacing:-0.458px">Clear</span>
<svg class="r" style="left:1143px;top:124px" width="7" height="5" viewBox="0 0 7 5"><path d="M1 1h5l-2.5 3z" fill="#666"/></svg>
<span class="t" style="left:1190.00px;top:74.00px;font-size:16px;color:#2e74b5;-webkit-text-stroke:0.5px #2e74b5">A</span>
<span class="t" style="left:1191.00px;top:87.00px;font-size:15px;color:#9b59b6;-webkit-text-stroke:0.5px #9b59b6">Z</span>
<svg class="r" style="left:1202px;top:81px" width="18" height="17" viewBox="0 0 18 17"><path d="M0.400 0.800h17l-6.600 7.200v7.400l-3.200-1.600V8z" fill="#8a8a8a"/><path d="M8.800 8.400v5.600l1 0.500V8.400z" fill="#f3f3f3"/></svg>
<span class="t" style="left:1188.00px;top:109.00px;font-size:12px;color:#3c3c3c;letter-spacing:0.040px">Sort &amp;</span>
<span class="t" style="left:1188.70px;top:125.00px;font-size:12px;color:#3c3c3c;letter-spacing:-0.279px">Filter</span>
<svg class="r" style="left:1216px;top:128px" width="7" height="5" viewBox="0 0 7 5"><path d="M1 1h5l-2.5 3z" fill="#666"/></svg>
<svg class="r" style="left:1233px;top:73px" width="29" height="29" viewBox="0 0 29 29"><circle cx="18.500" cy="10" r="8.600" fill="#fff" stroke="#3f78bf" stroke-width="2"/><path d="M12.200 16.400L2.400 26.400" stroke="#3f78bf" stroke-width="3.400" stroke-linecap="round"/></svg>
<span class="t" style="left:1230.40px;top:109.00px;font-size:12px;color:#3c3c3c;letter-spacing:0.102px">Find &amp;</span>
<span class="t" style="left:1228.20px;top:125.00px;font-size:12px;color:#3c3c3c;letter-spacing:-0.427px">Select</span>
<svg class="r" style="left:1261px;top:128px" width="7" height="5" viewBox="0 0 7 5"><path d="M1 1h5l-2.5 3z" fill="#666"/></svg>
<span class="t" style="left:1162.40px;top:144.00px;font-size:12px;color:#3c3c3c;letter-spacing:-0.072px">Editing</span>
<div class="r" style="left:1274px;top:70px;width:1px;height:84px;background:#d6d6d6"></div>
<svg class="r" style="left:1346px;top:146px" width="11" height="8" viewBox="0 0 11 8"><path d="M1 6.600l4.500-4.800 4.500 4.800" fill="none" stroke="#666" stroke-width="1.700"/></svg>
<div class="r" style="left:7px;top:169px;width:102px;height:26px;background:#fff;border:1px solid #c6c6c6"></div>
<span class="t" style="left:14.40px;top:177.00px;font-size:12px;color:#444">R23</span>
<svg class="r" style="left:94px;top:178px" width="9" height="6" viewBox="0 0 9 6"><path d="M1 1h7l-3.5 4z" fill="#777"/></svg>
<div class="r" style="left:123px;top:177px;width:2px;height:2px;background:#b4b4b4"></div>
<div class="r" style="left:123px;top:181px;width:2px;height:2px;background:#b4b4b4"></div>
<div class="r" style="left:123px;top:185px;width:2px;height:2px;background:#b4b4b4"></div>
<div class="r" style="left:139px;top:169px;width:110px;height:26px;background:#fff;border:1px solid #c6c6c6"></div>
<svg class="r" style="left:152px;top:176px" width="12" height="12" viewBox="0 0 12 12"><path d="M1 1l10 10M11 1L1 11" stroke="#b9b9b9" stroke-width="1.900" fill="none"/></svg>
<svg class="r" style="left:187px;top:176px" width="15" height="12" viewBox="0 0 15 12"><path d="M1.200 6.800l4 3.800L13.600 1.200" stroke="#b9b9b9" stroke-width="2.400" fill="none"/></svg>
<span class="t" style="left:224.30px;top:174.00px;font-size:15px;color:#555;font-family:'Liberation Serif',serif;font-weight:bold;font-style:italic">f</span>
<span class="t" style="left:229.60px;top:177.00px;font-size:11px;color:#555;font-family:'Liberation Serif',serif;font-weight:bold;font-style:italic">x</span>
<div class="r" style="left:252px;top:169px;width:1109px;height:26px;background:#fff;border:1px solid #c6c6c6"></div>
<svg class="r" style="left:1348px;top:178px" width="9" height="7" viewBox="0 0 9 7"><path d="M1 1.2l3.5 3.6L8 1.2" stroke="#555" stroke-width="1.7" fill="none"/></svg>
<div class="r" style="left:28px;top:222px;width:1316px;height:624px;background:#fff"></div>
<div class="r" style="left:2px;top:222px;width:26px;height:624px;background:#e6e6e6"></div>
<div class="r" style="left:28px;top:247px;width:1316px;height:1px;background:#d4d4d4"></div><div class="r" style="left:28px;top:273px;width:1316px;height:1px;background:#d4d4d4"></div><div class="r" style="left:28px;top:299px;width:1316px;height:1px;background:#d4d4d4"></div><div class="r" style="left:28px;top:325px;width:1316px;height:1px;background:#d4d4d4"></div><div class="r" style="left:28px;top:351px;width:1316px;height:1px;background:#d4d4d4"></div><div class="r" style="left:28px;top:377px;width:1316px;height:1px;background:#d4d4d4"></div><div class="r" style="left:28px;top:403px;width:1316px;height:1px;background:#d4d4d4"></div><div class="r" style="left:28px;top:429px;width:1316px;height:1px;background:#d4d4d4"></div><div class="r" style="left:28px;top:455px;width:1316px;height:1px;background:#d4d4d4"></div><div class="r" style="left:28px;top:481px;width:1316px;height:1px;background:#d4d4d4"></div><div class="r" style="left:28px;top:507px;width:1316px;height:1px;background:#d4d4d4"></div><div class="r" style="left:28px;top:533px;width:1316px;height:1px;background:#d4d4d4"></div><div class="r" style="left:28px;top:559px;width:1316px;height:1px;background:#d4d4d4"></div><div class="r" style="left:28px;top:585px;width:1316px;height:1px;background:#d4d4d4"></div><div class="r" style="left:28px;top:611px;width:1316px;height:1px;background:#d4d4d4"></div><div class="r" style="left:28px;top:637px;width:1316px;height:1px;background:#d4d4d4"></div><div class="r" style="left:28px;top:663px;width:1316px;height:1px;background:#d4d4d4"></div><div class="r" style="left:28px;top:689px;width:1316px;height:1px;background:#d4d4d4"></div><div class="r" style="left:28px;top:715px;width:1316px;height:1px;background:#d4d4d4"></div><div class="r" style="left:28px;top:741px;width:1316px;height:1px;background:#d4d4d4"></div><div class="r" style="left:28px;top:767px;width:1316px;height:1px;background:#d4d4d4"></div><div class="r" style="left:28px;top:793px;width:1316px;height:1px;background:#d4d4d4"></div><div class="r" style="left:28px;top:819px;width:1316px;height:1px;background:#d4d4d4"></div><div class="r" style="left:28px;top:845px;width:1316px;height:1px;background:#d4d4d4"></div>
<div class="r" style="left:312px;top:222px;width:1px;height:624px;background:#d4d4d4"></div>
<div class="r" style="left:457px;top:222px;width:1px;height:624px;background:#d4d4d4"></div>
<div class="r" style="left:602px;top:222px;width:1px;height:624px;background:#d4d4d4"></div>
<div class="r" style="left:677px;top:222px;width:1px;height:624px;background:#d4d4d4"></div>
<div class="r" style="left:752px;top:222px;width:1px;height:624px;background:#d4d4d4"></div>
<div class="r" style="left:827px;top:222px;width:1px;height:624px;background:#d4d4d4"></div>
<div class="r" style="left:902px;top:222px;width:1px;height:624px;background:#d4d4d4"></div>
<div class="r" style="left:977px;top:222px;width:1px;height:624px;background:#d4d4d4"></div>
<div class="r" style="left:1052px;top:222px;width:1px;height:624px;background:#d4d4d4"></div>
<div class="r" style="left:1127px;top:222px;width:1px;height:624px;background:#d4d4d4"></div>
<div class="r" style="left:1202px;top:222px;width:1px;height:624px;background:#d4d4d4"></div>
<div class="r" style="left:1266px;top:222px;width:1px;height:624px;background:#d4d4d4"></div>
<div class="r" style="left:1330px;top:222px;width:1px;height:624px;background:#d4d4d4"></div>
<div class="r" style="left:28px;top:222px;width:1174px;height:25px;background:#fff"></div>
<div class="r" style="left:28px;top:248px;width:1174px;height:25px;background:#fff"></div>
<div class="r" style="left:28px;top:274px;width:1174px;height:25px;background:#fff"></div>
<div class="r" style="left:28px;top:300px;width:1174px;height:25px;background:#fff"></div>
<div class="r" style="left:28px;top:352px;width:284px;height:51px;background:#fff"></div>
<div class="r" style="left:313px;top:352px;width:289px;height:25px;background:#fff"></div>
<div class="r" style="left:603px;top:352px;width:149px;height:25px;background:#fff"></div>
<div class="r" style="left:753px;top:352px;width:149px;height:25px;background:#fff"></div>
<div class="r" style="left:903px;top:352px;width:149px;height:25px;background:#fff"></div>
<div class="r" style="left:1053px;top:352px;width:149px;height:25px;background:#fff"></div>
<div class="r" style="left:312px;top:205px;width:1px;height:16px;background:#b4b4b4"></div>
<span class="t" style="left:165.55px;top:207.00px;font-size:13.33px;color:#222">A</span>
<div class="r" style="left:457px;top:205px;width:1px;height:16px;background:#b4b4b4"></div>
<span class="t" style="left:380.55px;top:207.00px;font-size:13.33px;color:#222">B</span>
<div class="r" style="left:602px;top:205px;width:1px;height:16px;background:#b4b4b4"></div>
<span class="t" style="left:525.18px;top:207.00px;font-size:13.33px;color:#222">C</span>
<div class="r" style="left:677px;top:205px;width:1px;height:16px;background:#b4b4b4"></div>
<span class="t" style="left:635.18px;top:207.00px;font-size:13.33px;color:#222">D</span>
<div class="r" style="left:752px;top:205px;width:1px;height:16px;background:#b4b4b4"></div>
<span class="t" style="left:710.55px;top:207.00px;font-size:13.33px;color:#222">E</span>
<div class="r" style="left:827px;top:205px;width:1px;height:16px;background:#b4b4b4"></div>
<span class="t" style="left:785.92px;top:207.00px;font-size:13.33px;color:#222">F</span>
<div class="r" style="left:902px;top:205px;width:1px;height:16px;background:#b4b4b4"></div>
<span class="t" style="left:859.81px;top:207.00px;font-size:13.33px;color:#222">G</span>
<div class="r" style="left:977px;top:205px;width:1px;height:16px;background:#b4b4b4"></div>
<span class="t" style="left:935.18px;top:207.00px;font-size:13.33px;color:#222">H</span>
<div class="r" style="left:1052px;top:205px;width:1px;height:16px;background:#b4b4b4"></div>
<span class="t" style="left:1013.15px;top:207.00px;font-size:13.33px;color:#222">I</span>
<div class="r" style="left:1127px;top:205px;width:1px;height:16px;background:#b4b4b4"></div>
<span class="t" style="left:1086.66px;top:207.00px;font-size:13.33px;color:#222">J</span>
<div class="r" style="left:1202px;top:205px;width:1px;height:16px;background:#b4b4b4"></div>
<span class="t" style="left:1160.55px;top:207.00px;font-size:13.33px;color:#222">K</span>
<div class="r" style="left:1266px;top:205px;width:1px;height:16px;background:#b4b4b4"></div>
<span class="t" style="left:1230.79px;top:207.00px;font-size:13.33px;color:#222">L</span>
<div class="r" style="left:1330px;top:205px;width:1px;height:16px;background:#b4b4b4"></div>
<span class="t" style="left:1292.95px;top:207.00px;font-size:13.33px;color:#222">M</span>
<div class="r" style="left:27px;top:205px;width:1px;height:16px;background:#b4b4b4"></div>
<svg class="r" style="left:15px;top:209px" width="10" height="10" viewBox="0 0 10 10"><path d="M9.5 0.500v9h-9z" fill="#b7b7b7"/></svg>
<div class="r" style="left:2px;top:247px;width:26px;height:1px;background:#b4b4b4"></div>
<span class="t" style="left:11.09px;top:233.00px;font-size:13.33px;color:#222">1</span>
<div class="r" style="left:2px;top:273px;width:26px;height:1px;background:#b4b4b4"></div>
<span class="t" style="left:11.09px;top:259.00px;font-size:13.33px;color:#222">2</span>
<div class="r" style="left:2px;top:299px;width:26px;height:1px;background:#b4b4b4"></div>
<span class="t" style="left:11.09px;top:285.00px;font-size:13.33px;color:#222">3</span>
<div class="r" style="left:2px;top:325px;width:26px;height:1px;background:#b4b4b4"></div>
<span class="t" style="left:11.09px;top:311.00px;font-size:13.33px;color:#222">4</span>
<div class="r" style="left:2px;top:351px;width:26px;height:1px;background:#b4b4b4"></div>
<span class="t" style="left:11.09px;top:337.00px;font-size:13.33px;color:#222">5</span>
<div class="r" style="left:2px;top:377px;width:26px;height:1px;background:#b4b4b4"></div>
<span class="t" style="left:11.09px;top:363.00px;font-size:13.33px;color:#222">6</span>
<div class="r" style="left:2px;top:403px;width:26px;height:1px;background:#b4b4b4"></div>
<span class="t" style="left:11.09px;top:389.00px;font-size:13.33px;color:#222">7</span>
<div class="r" style="left:2px;top:429px;width:26px;height:1px;background:#b4b4b4"></div>
<span class="t" style="left:11.09px;top:415.00px;font-size:13.33px;color:#222">8</span>
<div class="r" style="left:2px;top:455px;width:26px;height:1px;background:#b4b4b4"></div>
<span class="t" style="left:11.09px;top:441.00px;font-size:13.33px;color:#222">9</span>
<div class="r" style="left:2px;top:481px;width:26px;height:1px;background:#b4b4b4"></div>
<span class="t" style="left:7.39px;top:467.00px;font-size:13.33px;color:#222">10</span>
<div class="r" style="left:2px;top:507px;width:26px;height:1px;background:#b4b4b4"></div>
<span class="t" style="left:7.88px;top:493.00px;font-size:13.33px;color:#222">11</span>
<div class="r" style="left:2px;top:533px;width:26px;height:1px;background:#b4b4b4"></div>
<span class="t" style="left:7.39px;top:519.00px;font-size:13.33px;color:#222">12</span>
<div class="r" style="left:2px;top:559px;width:26px;height:1px;background:#b4b4b4"></div>
<span class="t" style="left:7.39px;top:545.00px;font-size:13.33px;color:#222">13</span>
<div class="r" style="left:2px;top:585px;width:26px;height:1px;background:#b4b4b4"></div>
<span class="t" style="left:7.39px;top:571.00px;font-size:13.33px;color:#222">14</span>
<div class="r" style="left:2px;top:611px;width:26px;height:1px;background:#b4b4b4"></div>
<span class="t" style="left:7.39px;top:597.00px;font-size:13.33px;color:#222">15</span>
<div class="r" style="left:2px;top:637px;width:26px;height:1px;background:#b4b4b4"></div>
<span class="t" style="left:7.39px;top:623.00px;font-size:13.33px;color:#222">16</span>
<div class="r" style="left:2px;top:663px;width:26px;height:1px;background:#b4b4b4"></div>
<span class="t" style="left:7.39px;top:649.00px;font-size:13.33px;color:#222">17</span>
<div class="r" style="left:2px;top:689px;width:26px;height:1px;background:#b4b4b4"></div>
<span class="t" style="left:7.39px;top:675.00px;font-size:13.33px;color:#222">18</span>
<div class="r" style="left:2px;top:715px;width:26px;height:1px;background:#b4b4b4"></div>
<span class="t" style="left:7.39px;top:701.00px;font-size:13.33px;color:#222">19</span>
<div class="r" style="left:2px;top:741px;width:26px;height:1px;background:#b4b4b4"></div>
<span class="t" style="left:7.39px;top:727.00px;font-size:13.33px;color:#222">20</span>
<div class="r" style="left:2px;top:767px;width:26px;height:1px;background:#b4b4b4"></div>
<span class="t" style="left:7.39px;top:753.00px;font-size:13.33px;color:#222">21</span>
<div class="r" style="left:2px;top:793px;width:26px;height:1px;background:#b4b4b4"></div>
<span class="t" style="left:7.39px;top:779.00px;font-size:13.33px;color:#222">22</span>
<div class="r" style="left:2px;top:794px;width:24px;height:25px;background:#d2d2d2"></div>
<div class="r" style="left:2px;top:819px;width:24px;height:1px;background:#b4b4b4"></div>
<span class="t" style="left:7.39px;top:805.00px;font-size:13.33px;color:#217346">23</span>
<div class="r" style="left:2px;top:845px;width:26px;height:1px;background:#b4b4b4"></div>
<span class="t" style="left:7.39px;top:831.00px;font-size:13.33px;color:#222">24</span>
<span class="t" style="left:30.20px;top:227.00px;font-size:16px;color:#000;font-family:'Liberation Serif',serif;letter-spacing:-0.175px">PHÒNG GIÁO DỤC VÀ ĐÀO TẠO TP MISA</span>
<span class="t" style="left:30.20px;top:253.00px;font-size:16px;color:#000;font-family:'Liberation Serif',serif;font-weight:bold;letter-spacing:-0.163px">TRƯỜNG TIỂU HỌC MISA</span>
<span class="t" style="left:329.90px;top:278.00px;font-size:18.67px;color:#000;font-family:'Liberation Serif',serif;font-weight:bold;letter-spacing:0.208px">THỐNG KÊ CHẤT LƯỢNG GIÁO DỤC TIỂU HỌC HỌC SINH NỮ</span>
<span class="t" style="left:498.01px;top:305.00px;font-size:16px;color:#000;font-family:'Liberation Serif',serif;letter-spacing:-0.176px">Giữa học kỳ II - Năm học 2020-2021</span>
<div class="r" style="left:28px;top:351px;width:1175px;height:1px;background:#000"></div><div class="r" style="left:313px;top:377px;width:890px;height:1px;background:#000"></div><div class="r" style="left:28px;top:403px;width:1175px;height:1px;background:#000"></div><div class="r" style="left:28px;top:429px;width:1175px;height:1px;background:#000"></div><div class="r" style="left:28px;top:455px;width:1175px;height:1px;background:#000"></div><div class="r" style="left:28px;top:481px;width:1175px;height:1px;background:#000"></div><div class="r" style="left:28px;top:507px;width:1175px;height:1px;background:#000"></div><div class="r" style="left:28px;top:533px;width:1175px;height:1px;background:#000"></div><div class="r" style="left:28px;top:559px;width:1175px;height:1px;background:#000"></div><div class="r" style="left:28px;top:585px;width:1175px;height:1px;background:#000"></div><div class="r" style="left:28px;top:611px;width:1175px;height:1px;background:#000"></div><div class="r" style="left:28px;top:637px;width:1175px;height:1px;background:#000"></div><div class="r" style="left:28px;top:663px;width:1175px;height:1px;background:#000"></div><div class="r" style="left:28px;top:689px;width:1175px;height:1px;background:#000"></div><div class="r" style="left:28px;top:715px;width:1175px;height:1px;background:#000"></div><div class="r" style="left:28px;top:741px;width:1175px;height:1px;background:#000"></div><div class="r" style="left:28px;top:767px;width:1175px;height:1px;background:#000"></div><div class="r" style="left:28px;top:793px;width:1175px;height:1px;background:#000"></div><div class="r" style="left:28px;top:819px;width:1175px;height:1px;background:#000"></div><div class="r" style="left:28px;top:845px;width:1175px;height:1px;background:#000"></div><div class="r" style="left:312px;top:351px;width:1px;height:495px;background:#000"></div><div class="r" style="left:457px;top:377px;width:1px;height:469px;background:#000"></div><div class="r" style="left:602px;top:351px;width:1px;height:495px;background:#000"></div><div class="r" style="left:677px;top:377px;width:1px;height:469px;background:#000"></div><div class="r" style="left:752px;top:351px;width:1px;height:495px;background:#000"></div><div class="r" style="left:827px;top:377px;width:1px;height:469px;background:#000"></div><div class="r" style="left:902px;top:351px;width:1px;height:495px;background:#000"></div><div class="r" style="left:977px;top:377px;width:1px;height:469px;background:#000"></div><div class="r" style="left:1052px;top:351px;width:1px;height:495px;background:#000"></div><div class="r" style="left:1127px;top:377px;width:1px;height:469px;background:#000"></div><div class="r" style="left:1202px;top:351px;width:1px;height:495px;background:#000"></div>
<div class="r" style="left:2px;top:221px;width:1343px;height:1px;background:#9e9e9e"></div><div class="r" style="left:27px;top:222px;width:1px;height:624px;background:#9e9e9e"></div><div class="r" style="left:1344px;top:222px;width:1px;height:624px;background:#9e9e9e"></div>
<div class="r" style="left:26px;top:793px;width:2px;height:27px;background:#217346"></div>
<span class="t" style="left:410.95px;top:358.00px;font-size:13.33px;color:#000;font-family:'Liberation Serif',serif;letter-spacing:0.109px">Tổng số học sinh</span>
<span class="t" style="left:363.09px;top:384.00px;font-size:13.33px;color:#000;font-family:'Liberation Serif',serif;letter-spacing:0.082px">Tổng số</span>
<span class="t" style="left:510.19px;top:384.00px;font-size:13.33px;color:#000;font-family:'Liberation Serif',serif;letter-spacing:-0.429px">Tỷ lệ %</span>
<span class="t" style="left:649.88px;top:358.00px;font-size:13.33px;color:#000;font-family:'Liberation Serif',serif;letter-spacing:-0.241px">Khối lớp 2</span>
<span class="t" style="left:618.09px;top:384.00px;font-size:13.33px;color:#000;font-family:'Liberation Serif',serif;letter-spacing:0.082px">Tổng số</span>
<span class="t" style="left:695.19px;top:384.00px;font-size:13.33px;color:#000;font-family:'Liberation Serif',serif;letter-spacing:-0.429px">Tỷ lệ %</span>
<span class="t" style="left:799.88px;top:358.00px;font-size:13.33px;color:#000;font-family:'Liberation Serif',serif;letter-spacing:-0.241px">Khối lớp 3</span>
<span class="t" style="left:768.09px;top:384.00px;font-size:13.33px;color:#000;font-family:'Liberation Serif',serif;letter-spacing:0.082px">Tổng số</span>
<span class="t" style="left:845.19px;top:384.00px;font-size:13.33px;color:#000;font-family:'Liberation Serif',serif;letter-spacing:-0.429px">Tỷ lệ %</span>
<span class="t" style="left:949.88px;top:358.00px;font-size:13.33px;color:#000;font-family:'Liberation Serif',serif;letter-spacing:-0.241px">Khối lớp 4</span>
<span class="t" style="left:918.09px;top:384.00px;font-size:13.33px;color:#000;font-family:'Liberation Serif',serif;letter-spacing:0.082px">Tổng số</span>
<span class="t" style="left:995.19px;top:384.00px;font-size:13.33px;color:#000;font-family:'Liberation Serif',serif;letter-spacing:-0.429px">Tỷ lệ %</span>
<span class="t" style="left:1099.88px;top:358.00px;font-size:13.33px;color:#000;font-family:'Liberation Serif',serif;letter-spacing:-0.241px">Khối lớp 5</span>
<span class="t" style="left:1068.09px;top:384.00px;font-size:13.33px;color:#000;font-family:'Liberation Serif',serif;letter-spacing:0.082px">Tổng số</span>
<span class="t" style="left:1145.19px;top:384.00px;font-size:13.33px;color:#000;font-family:'Liberation Serif',serif;letter-spacing:-0.429px">Tỷ lệ %</span>
<span class="t" style="left:30.00px;top:410.00px;font-size:13.33px;color:#000;font-family:'Liberation Serif',serif;letter-spacing:0.122px">Tổng số học sinh</span>
<span class="t" style="left:30.00px;top:436.00px;font-size:13.33px;color:#000;font-family:'Liberation Serif',serif;font-weight:bold;letter-spacing:-0.593px">I. Kết quả học tập</span>
<span class="t" style="left:30.00px;top:462.00px;font-size:13.33px;color:#000;font-family:'Liberation Serif',serif;letter-spacing:-0.035px">1. Toán</span>
<span class="t" style="left:36.00px;top:488.00px;font-size:13.33px;color:#000;font-family:'Liberation Serif',serif;letter-spacing:0.106px">Hoàn thành tốt</span>
<span class="t" style="left:36.00px;top:514.00px;font-size:13.33px;color:#000;font-family:'Liberation Serif',serif;letter-spacing:0.109px">Hoàn thành</span>
<span class="t" style="left:36.20px;top:540.00px;font-size:13.33px;color:#000;font-family:'Liberation Serif',serif;letter-spacing:0.054px">Chưa hoàn thành</span>
<span class="t" style="left:30.00px;top:566.00px;font-size:13.33px;color:#000;font-family:'Liberation Serif',serif;letter-spacing:-0.166px">2. Tiếng Việt</span>
<span class="t" style="left:36.00px;top:592.00px;font-size:13.33px;color:#000;font-family:'Liberation Serif',serif;letter-spacing:0.106px">Hoàn thành tốt</span>
<span class="t" style="left:36.00px;top:618.00px;font-size:13.33px;color:#000;font-family:'Liberation Serif',serif;letter-spacing:0.109px">Hoàn thành</span>
<span class="t" style="left:36.20px;top:644.00px;font-size:13.33px;color:#000;font-family:'Liberation Serif',serif;letter-spacing:0.054px">Chưa hoàn thành</span>
<span class="t" style="left:30.00px;top:670.00px;font-size:13.33px;color:#000;font-family:'Liberation Serif',serif;letter-spacing:-0.217px">3. Đạo đức</span>
<span class="t" style="left:36.00px;top:696.00px;font-size:13.33px;color:#000;font-family:'Liberation Serif',serif;letter-spacing:0.106px">Hoàn thành tốt</span>
<span class="t" style="left:36.00px;top:722.00px;font-size:13.33px;color:#000;font-family:'Liberation Serif',serif;letter-spacing:0.109px">Hoàn thành</span>
<span class="t" style="left:36.20px;top:748.00px;font-size:13.33px;color:#000;font-family:'Liberation Serif',serif;letter-spacing:0.054px">Chưa hoàn thành</span>
<span class="t" style="left:30.00px;top:774.00px;font-size:13.33px;color:#000;font-family:'Liberation Serif',serif;letter-spacing:-0.140px">4. Tự nhiên và Xã hội</span>
<span class="t" style="left:36.00px;top:800.00px;font-size:13.33px;color:#000;font-family:'Liberation Serif',serif;letter-spacing:0.106px">Hoàn thành tốt</span>
<span class="t" style="left:36.00px;top:826.00px;font-size:13.33px;color:#000;font-family:'Liberation Serif',serif;letter-spacing:0.109px">Hoàn thành</span>
<span class="t" style="left:436.27px;top:410.00px;font-size:13.33px;color:#000;font-family:'Liberation Serif',serif;letter-spacing:-0.533px">382</span>
<span class="t" style="left:662.40px;top:410.00px;font-size:13.33px;color:#000;font-family:'Liberation Serif',serif;letter-spacing:-0.533px">88</span>
<span class="t" style="left:806.27px;top:410.00px;font-size:13.33px;color:#000;font-family:'Liberation Serif',serif;letter-spacing:-0.533px">120</span>
<span class="t" style="left:956.27px;top:410.00px;font-size:13.33px;color:#000;font-family:'Liberation Serif',serif;letter-spacing:-0.533px">103</span>
<span class="t" style="left:1112.41px;top:410.00px;font-size:13.33px;color:#000;font-family:'Liberation Serif',serif;letter-spacing:-0.533px">71</span>
<span class="t" style="left:436.27px;top:462.00px;font-size:13.33px;color:#000;font-family:'Liberation Serif',serif;letter-spacing:-0.533px">382</span>
<span class="t" style="left:662.40px;top:462.00px;font-size:13.33px;color:#000;font-family:'Liberation Serif',serif;letter-spacing:-0.533px">88</span>
<span class="t" style="left:806.27px;top:462.00px;font-size:13.33px;color:#000;font-family:'Liberation Serif',serif;letter-spacing:-0.533px">120</span>
<span class="t" style="left:956.27px;top:462.00px;font-size:13.33px;color:#000;font-family:'Liberation Serif',serif;letter-spacing:-0.533px">103</span>
<span class="t" style="left:1112.41px;top:462.00px;font-size:13.33px;color:#000;font-family:'Liberation Serif',serif;letter-spacing:-0.533px">71</span>
<span class="t" style="left:743.53px;top:488.00px;font-size:13.33px;color:#000;font-family:'Liberation Serif',serif;letter-spacing:-0.534px">0</span>
<span class="t" style="left:893.53px;top:488.00px;font-size:13.33px;color:#000;font-family:'Liberation Serif',serif;letter-spacing:-0.534px">0</span>
<span class="t" style="left:1043.53px;top:488.00px;font-size:13.33px;color:#000;font-family:'Liberation Serif',serif;letter-spacing:-0.534px">0</span>
<span class="t" style="left:1193.53px;top:488.00px;font-size:13.33px;color:#000;font-family:'Liberation Serif',serif;letter-spacing:-0.534px">0</span>
<span class="t" style="left:743.53px;top:514.00px;font-size:13.33px;color:#000;font-family:'Liberation Serif',serif;letter-spacing:-0.534px">0</span>
<span class="t" style="left:893.53px;top:514.00px;font-size:13.33px;color:#000;font-family:'Liberation Serif',serif;letter-spacing:-0.534px">0</span>
<span class="t" style="left:1043.53px;top:514.00px;font-size:13.33px;color:#000;font-family:'Liberation Serif',serif;letter-spacing:-0.534px">0</span>
<span class="t" style="left:1193.53px;top:514.00px;font-size:13.33px;color:#000;font-family:'Liberation Serif',serif;letter-spacing:-0.534px">0</span>
<span class="t" style="left:593.53px;top:514.00px;font-size:13.33px;color:#000;font-family:'Liberation Serif',serif;letter-spacing:-0.534px">0</span>
<span class="t" style="left:743.53px;top:540.00px;font-size:13.33px;color:#000;font-family:'Liberation Serif',serif;letter-spacing:-0.534px">0</span>
<span class="t" style="left:893.53px;top:540.00px;font-size:13.33px;color:#000;font-family:'Liberation Serif',serif;letter-spacing:-0.534px">0</span>
<span class="t" style="left:1043.53px;top:540.00px;font-size:13.33px;color:#000;font-family:'Liberation Serif',serif;letter-spacing:-0.534px">0</span>
<span class="t" style="left:1193.53px;top:540.00px;font-size:13.33px;color:#000;font-family:'Liberation Serif',serif;letter-spacing:-0.534px">0</span>
<span class="t" style="left:593.53px;top:540.00px;font-size:13.33px;color:#000;font-family:'Liberation Serif',serif;letter-spacing:-0.534px">0</span>
<span class="t" style="left:436.27px;top:566.00px;font-size:13.33px;color:#000;font-family:'Liberation Serif',serif;letter-spacing:-0.533px">382</span>
<span class="t" style="left:662.40px;top:566.00px;font-size:13.33px;color:#000;font-family:'Liberation Serif',serif;letter-spacing:-0.533px">88</span>
<span class="t" style="left:806.27px;top:566.00px;font-size:13.33px;color:#000;font-family:'Liberation Serif',serif;letter-spacing:-0.533px">120</span>
<span class="t" style="left:956.27px;top:566.00px;font-size:13.33px;color:#000;font-family:'Liberation Serif',serif;letter-spacing:-0.533px">103</span>
<span class="t" style="left:1112.41px;top:566.00px;font-size:13.33px;color:#000;font-family:'Liberation Serif',serif;letter-spacing:-0.533px">71</span>
<span class="t" style="left:743.53px;top:592.00px;font-size:13.33px;color:#000;font-family:'Liberation Serif',serif;letter-spacing:-0.534px">0</span>
<span class="t" style="left:893.53px;top:592.00px;font-size:13.33px;color:#000;font-family:'Liberation Serif',serif;letter-spacing:-0.534px">0</span>
<span class="t" style="left:1043.53px;top:592.00px;font-size:13.33px;color:#000;font-family:'Liberation Serif',serif;letter-spacing:-0.534px">0</span>
<span class="t" style="left:1193.53px;top:592.00px;font-size:13.33px;color:#000;font-family:'Liberation Serif',serif;letter-spacing:-0.534px">0</span>
<span class="t" style="left:743.53px;top:618.00px;font-size:13.33px;color:#000;font-family:'Liberation Serif',serif;letter-spacing:-0.534px">0</span>
<span class="t" style="left:893.53px;top:618.00px;font-size:13.33px;color:#000;font-family:'Liberation Serif',serif;letter-spacing:-0.534px">0</span>
<span class="t" style="left:1043.53px;top:618.00px;font-size:13.33px;color:#000;font-family:'Liberation Serif',serif;letter-spacing:-0.534px">0</span>
<span class="t" style="left:1193.53px;top:618.00px;font-size:13.33px;color:#000;font-family:'Liberation Serif',serif;letter-spacing:-0.534px">0</span>
<span class="t" style="left:593.53px;top:618.00px;font-size:13.33px;color:#000;font-family:'Liberation Serif',serif;letter-spacing:-0.534px">0</span>
<span class="t" style="left:743.53px;top:644.00px;font-size:13.33px;color:#000;font-family:'Liberation Serif',serif;letter-spacing:-0.534px">0</span>
<span class="t" style="left:893.53px;top:644.00px;font-size:13.33px;color:#000;font-family:'Liberation Serif',serif;letter-spacing:-0.534px">0</span>
<span class="t" style="left:1043.53px;top:644.00px;font-size:13.33px;color:#000;font-family:'Liberation Serif',serif;letter-spacing:-0.534px">0</span>
<span class="t" style="left:1193.53px;top:644.00px;font-size:13.33px;color:#000;font-family:'Liberation Serif',serif;letter-spacing:-0.534px">0</span>
<span class="t" style="left:593.53px;top:644.00px;font-size:13.33px;color:#000;font-family:'Liberation Serif',serif;letter-spacing:-0.534px">0</span>
<span class="t" style="left:436.27px;top:670.00px;font-size:13.33px;color:#000;font-family:'Liberation Serif',serif;letter-spacing:-0.533px">382</span>
<span class="t" style="left:662.40px;top:670.00px;font-size:13.33px;color:#000;font-family:'Liberation Serif',serif;letter-spacing:-0.533px">88</span>
<span class="t" style="left:806.27px;top:670.00px;font-size:13.33px;color:#000;font-family:'Liberation Serif',serif;letter-spacing:-0.533px">120</span>
<span class="t" style="left:956.27px;top:670.00px;font-size:13.33px;color:#000;font-family:'Liberation Serif',serif;letter-spacing:-0.533px">103</span>
<span class="t" style="left:1112.41px;top:670.00px;font-size:13.33px;color:#000;font-family:'Liberation Serif',serif;letter-spacing:-0.533px">71</span>
<span class="t" style="left:743.53px;top:696.00px;font-size:13.33px;color:#000;font-family:'Liberation Serif',serif;letter-spacing:-0.534px">0</span>
<span class="t" style="left:893.53px;top:696.00px;font-size:13.33px;color:#000;font-family:'Liberation Serif',serif;letter-spacing:-0.534px">0</span>
<span class="t" style="left:1043.53px;top:696.00px;font-size:13.33px;color:#000;font-family:'Liberation Serif',serif;letter-spacing:-0.534px">0</span>
<span class="t" style="left:1193.53px;top:696.00px;font-size:13.33px;color:#000;font-family:'Liberation Serif',serif;letter-spacing:-0.534px">0</span>
<span class="t" style="left:743.53px;top:722.00px;font-size:13.33px;color:#000;font-family:'Liberation Serif',serif;letter-spacing:-0.534px">0</span>
<span class="t" style="left:893.53px;top:722.00px;font-size:13.33px;color:#000;font-family:'Liberation Serif',serif;letter-spacing:-0.534px">0</span>
<span class="t" style="left:1043.53px;top:722.00px;font-size:13.33px;color:#000;font-family:'Liberation Serif',serif;letter-spacing:-0.534px">0</span>
<span class="t" style="left:1193.53px;top:722.00px;font-size:13.33px;color:#000;font-family:'Liberation Serif',serif;letter-spacing:-0.534px">0</span>
<span class="t" style="left:593.53px;top:722.00px;font-size:13.33px;color:#000;font-family:'Liberation Serif',serif;letter-spacing:-0.534px">0</span>
<span class="t" style="left:743.53px;top:748.00px;font-size:13.33px;color:#000;font-family:'Liberation Serif',serif;letter-spacing:-0.534px">0</span>
<span class="t" style="left:893.53px;top:748.00px;font-size:13.33px;color:#000;font-family:'Liberation Serif',serif;letter-spacing:-0.534px">0</span>
<span class="t" style="left:1043.53px;top:748.00px;font-size:13.33px;color:#000;font-family:'Liberation Serif',serif;letter-spacing:-0.534px">0</span>
<span class="t" style="left:1193.53px;top:748.00px;font-size:13.33px;color:#000;font-family:'Liberation Serif',serif;letter-spacing:-0.534px">0</span>
<span class="t" style="left:593.53px;top:748.00px;font-size:13.33px;color:#000;font-family:'Liberation Serif',serif;letter-spacing:-0.534px">0</span>
<span class="t" style="left:436.27px;top:774.00px;font-size:13.33px;color:#000;font-family:'Liberation Serif',serif;letter-spacing:-0.533px">208</span>
<span class="t" style="left:662.40px;top:774.00px;font-size:13.33px;color:#000;font-family:'Liberation Serif',serif;letter-spacing:-0.533px">88</span>
<span class="t" style="left:806.27px;top:774.00px;font-size:13.33px;color:#000;font-family:'Liberation Serif',serif;letter-spacing:-0.533px">120</span>
<span class="t" style="left:743.53px;top:800.00px;font-size:13.33px;color:#000;font-family:'Liberation Serif',serif;letter-spacing:-0.534px">0</span>
<span class="t" style="left:893.53px;top:800.00px;font-size:13.33px;color:#000;font-family:'Liberation Serif',serif;letter-spacing:-0.534px">0</span>
<span class="t" style="left:1043.53px;top:800.00px;font-size:13.33px;color:#000;font-family:'Liberation Serif',serif;letter-spacing:-0.534px">0</span>
<span class="t" style="left:1193.53px;top:800.00px;font-size:13.33px;color:#000;font-family:'Liberation Serif',serif;letter-spacing:-0.534px">0</span>
<span class="t" style="left:743.53px;top:826.00px;font-size:13.33px;color:#000;font-family:'Liberation Serif',serif;letter-spacing:-0.534px">0</span>
<span class="t" style="left:893.53px;top:826.00px;font-size:13.33px;color:#000;font-family:'Liberation Serif',serif;letter-spacing:-0.534px">0</span>
<span class="t" style="left:1043.53px;top:826.00px;font-size:13.33px;color:#000;font-family:'Liberation Serif',serif;letter-spacing:-0.534px">0</span>
<span class="t" style="left:1193.53px;top:826.00px;font-size:13.33px;color:#000;font-family:'Liberation Serif',serif;letter-spacing:-0.534px">0</span>
<span class="t" style="left:593.53px;top:826.00px;font-size:13.33px;color:#000;font-family:'Liberation Serif',serif;letter-spacing:-0.534px">0</span>
<div class="r" style="left:1345px;top:222px;width:21px;height:624px;background:#e6e6e6"></div>
<div class="r" style="left:1348px;top:222px;width:15px;height:624px;background:#dcdcdc"></div>
<div class="r" style="left:1348px;top:207px;width:15px;height:15px;background:#fff;border:1px solid #ababab"></div>
<svg class="r" style="left:1351px;top:211px" width="9" height="6" viewBox="0 0 9 6"><path d="M0.500 5.500L4.500 1l4 4.500z" fill="#777"/></svg>
<div class="r" style="left:1348px;top:222px;width:15px;height:144px;background:#fff;border:1px solid #ababab"></div>
<div class="r" style="left:1348px;top:832px;width:15px;height:14px;background:#fff;border:1px solid #ababab"></div>
<svg class="r" style="left:1351px;top:837px" width="9" height="6" viewBox="0 0 9 6"><path d="M0.500 0.500h8L4.500 5z" fill="#777"/></svg>
<div class="r" style="left:2px;top:846px;width:1364px;height:28px;background:#e6e6e6"></div>
<div class="r" style="left:2px;top:874px;width:1364px;height:1px;background:#c8c8c8"></div>
<div class="r" style="left:2px;top:875px;width:1364px;height:21px;background:#f3f3f3"></div>
<svg class="r" style="left:28px;top:855px" width="6" height="9" viewBox="0 0 6 9"><path d="M5 0.500v8L0.500 4.500z" fill="#c0c0c0"/></svg>
<svg class="r" style="left:57px;top:855px" width="6" height="9" viewBox="0 0 6 9"><path d="M1 0.500v8L5.500 4.500z" fill="#c0c0c0"/></svg>
<div class="r" style="left:102px;top:850px;width:1px;height:20px;background:#ababab"></div>
<div class="r" style="left:156px;top:850px;width:1px;height:20px;background:#ababab"></div>
<div class="r" style="left:258px;top:850px;width:1px;height:20px;background:#ababab"></div>
<span class="t" style="left:115.00px;top:853.00px;font-size:13px;color:#555;letter-spacing:-0.586px">TT27</span>
<span class="t" style="left:171.00px;top:853.00px;font-size:13px;color:#555;letter-spacing:-0.318px">TT27 (hs nu)</span>
<span class="t" style="left:271.20px;top:853.00px;font-size:13px;color:#555;letter-spacing:-0.786px">TT22</span>
<div class="r" style="left:313px;top:846px;width:99px;height:28px;background:#fff"></div>
<div class="r" style="left:315px;top:869px;width:99px;height:2px;background:#217346"></div>
<div class="r" style="left:413px;top:848px;width:1px;height:22px;background:#ababab"></div>
<div class="r" style="left:312px;top:845px;width:100px;height:29px;border:3px solid #f0393e"></div>
<span class="t" style="left:324.50px;top:853.00px;font-size:13px;color:#217346;font-weight:bold;letter-spacing:-0.040px">TT22 (hs nu)</span>
<svg class="r" style="left:445.5px;top:851px" width="18" height="18" viewBox="0 0 18 18"><circle cx="9" cy="9" r="7.400" fill="none" stroke="#777" stroke-width="1.200"/><path d="M9 5v8M5 9h8" stroke="#777" stroke-width="1.600"/></svg>
<div class="r" style="left:820px;top:855px;width:2px;height:2px;background:#a6a6a6"></div>
<div class="r" style="left:820px;top:859px;width:2px;height:2px;background:#a6a6a6"></div>
<div class="r" style="left:820px;top:863px;width:2px;height:2px;background:#a6a6a6"></div>
<div class="r" style="left:837px;top:853px;width:15px;height:15px;background:#fff;border:1px solid #ababab"></div>
<svg class="r" style="left:842px;top:856px" width="6" height="9" viewBox="0 0 6 9"><path d="M5.500 0.500v8L1 4.500z" fill="#666"/></svg>
<div class="r" style="left:852px;top:853px;width:478px;height:15px;background:#dcdcdc"></div>
<div class="r" style="left:852px;top:853px;width:441px;height:15px;background:#fff;border:1px solid #ababab"></div>
<div class="r" style="left:1332px;top:853px;width:15px;height:15px;background:#fff;border:1px solid #ababab"></div>
<svg class="r" style="left:1337px;top:856px" width="6" height="9" viewBox="0 0 6 9"><path d="M0.500 0.500v8L5 4.500z" fill="#666"/></svg>
<span class="t" style="left:10.50px;top:878.00px;font-size:12px;color:#444;letter-spacing:-0.838px">Ready</span>
<div class="r" style="left:1069px;top:875px;width:38px;height:21px;background:#c6c6c6"></div>
<svg class="r" style="left:1080px;top:878px" width="15" height="14" viewBox="0 0 15 14"><path d="M0.500 0.500h13v12h-13zM0.500 4.500h13M0.500 8.500h13M4.800 0.500v12M9.200 0.500v12" fill="none" stroke="#5a5a5a" stroke-width="1.200"/></svg>
<svg class="r" style="left:1119px;top:878px" width="15" height="14" viewBox="0 0 15 14"><g shape-rendering="crispEdges"><path d="M0.500 0.500h13v12h-13z" fill="none" stroke="#6a6a6a"/><path d="M3.500 3.500h7v6h-7zM5 5.500h4M5 7.500h4" fill="none" stroke="#6a6a6a"/></g></svg>
<svg class="r" style="left:1157px;top:878px" width="15" height="14" viewBox="0 0 15 14"><path d="M0.500 0.500h13v12h-13zM4.500 0.500v6h4v-6M0.500 6.500h13" fill="none" stroke="#6a6a6a" shape-rendering="crispEdges"/></svg>
<div class="r" style="left:1188px;top:884px;width:7px;height:2px;background:#555"></div>
<div class="r" style="left:1198px;top:885px;width:100px;height:1px;background:#8a8a8a"></div>
<div class="r" style="left:1246px;top:879px;width:5px;height:12px;background:#666"></div>
<div class="r" style="left:1301px;top:884px;width:8px;height:2px;background:#555"></div>
<div class="r" style="left:1304px;top:881px;width:2px;height:8px;background:#555"></div>
<span class="t" style="left:1320.40px;top:878.00px;font-size:12px;color:#444;letter-spacing:-1.101px">100%</span>
</div></div>
</body></html>
